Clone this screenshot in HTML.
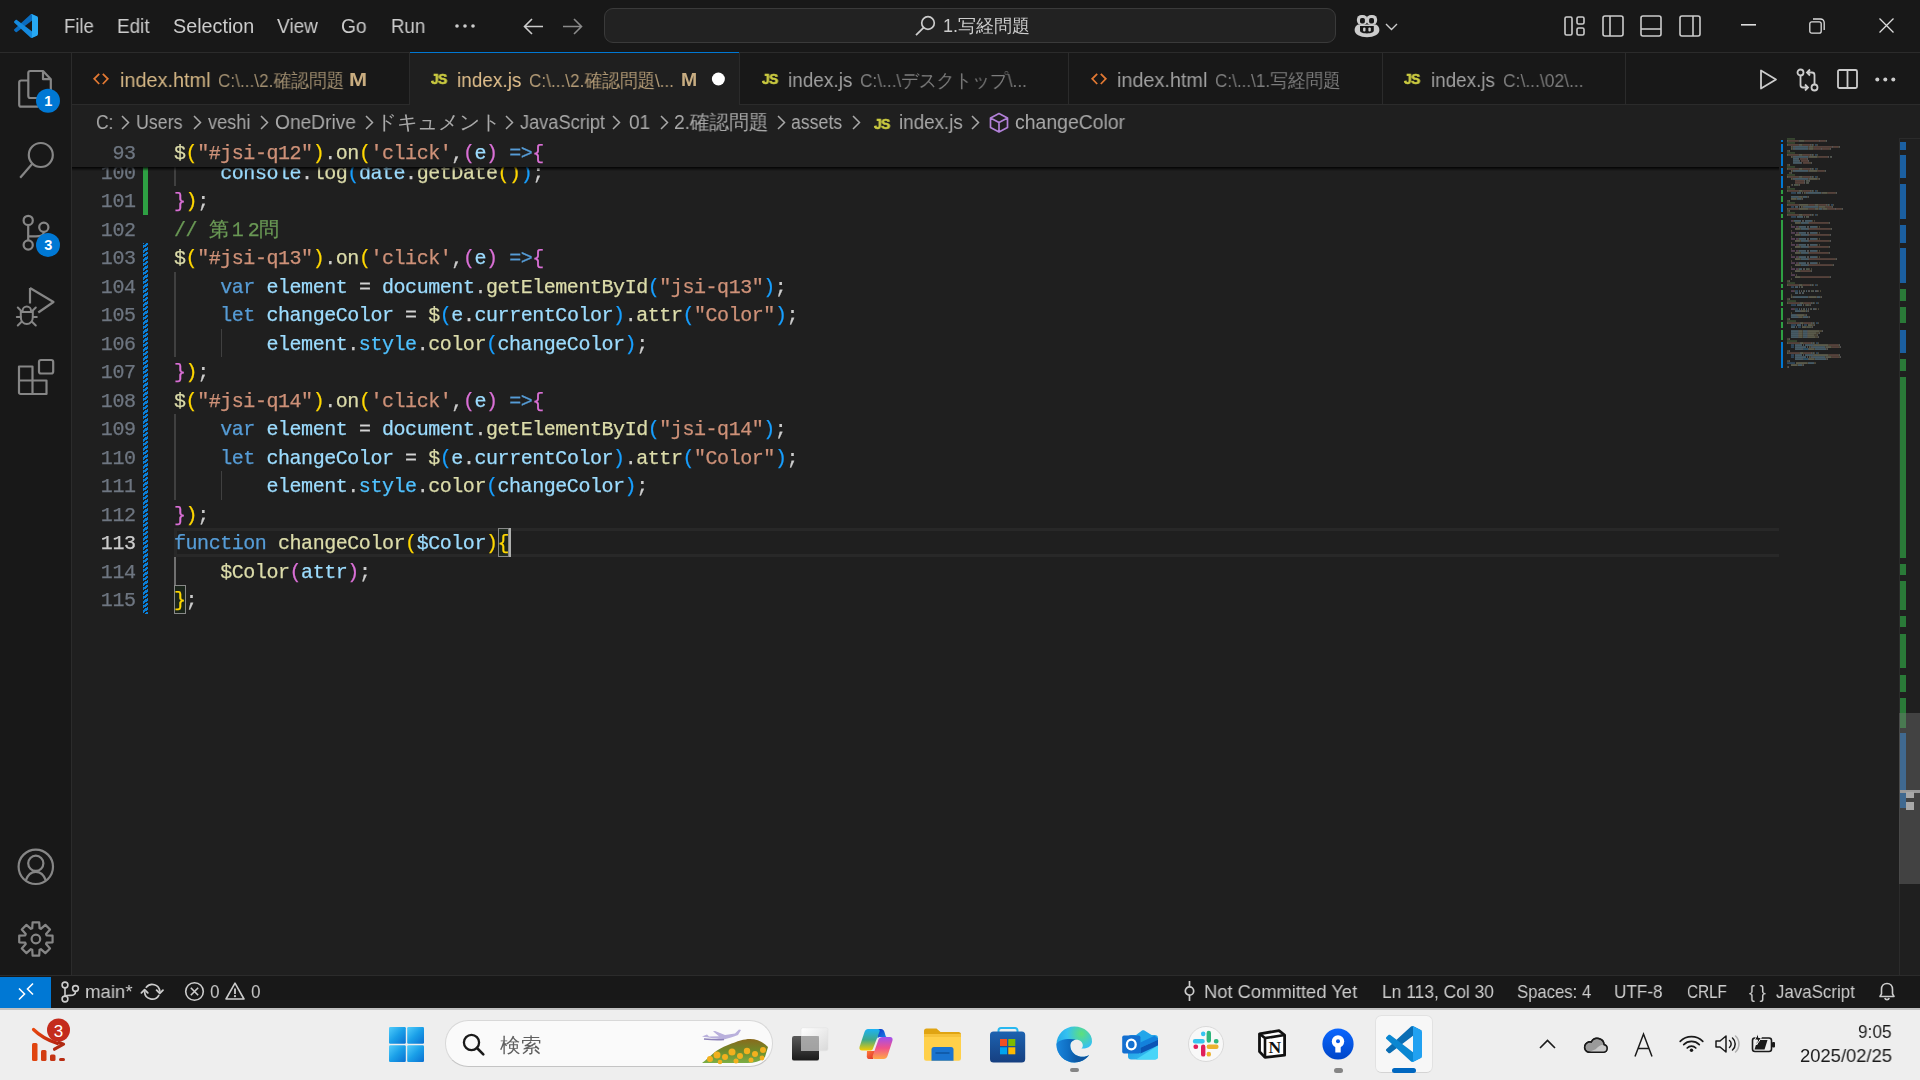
<!DOCTYPE html>
<html><head><meta charset="utf-8">
<style>
*{margin:0;padding:0;box-sizing:border-box}
html,body{width:1920px;height:1080px;overflow:hidden}
body{background:#1f1f1f;font-family:"Liberation Sans",sans-serif;position:relative;color:#cccccc}
.a{position:absolute}
.tx{white-space:nowrap;transform-origin:0 50%;will-change:transform}
.cl,.ln,.js,.bct{will-change:transform}
.cl,.ln{-webkit-text-stroke:0.25px currentColor}
svg{position:absolute;overflow:visible}
#title{left:0;top:0;width:1920px;height:53px;background:#181818;border-bottom:1px solid #2b2b2b}
#act{left:0;top:53px;width:72px;height:923px;background:#181818;border-right:1px solid #2b2b2b}
.js{font-family:"Liberation Sans",sans-serif;font-weight:bold;color:#cbcb41;font-size:15px;letter-spacing:-0.6px;line-height:15px;-webkit-text-stroke:0.6px #cbcb41;transform:scaleX(0.92);transform-origin:0 0}

#tabs{left:72px;top:53px;width:1848px;height:52px;background:#181818;border-bottom:1px solid #2b2b2b}
#bc{left:72px;top:105px;width:1848px;height:33px;background:#1f1f1f}

.cl{position:absolute;left:174.3px;height:28.5px;line-height:28.5px;font-family:"Liberation Mono",monospace;font-size:20px;letter-spacing:-0.4495px;white-space:pre;color:#cccccc}
.ln{position:absolute;left:70px;width:65.5px;text-align:right;height:28.5px;line-height:28.5px;font-family:"Liberation Mono",monospace;font-size:20px;letter-spacing:-0.4495px;color:#6e7681;white-space:pre}
.ig{position:absolute;width:1.5px;height:28.5px;background:#404040}

#status{left:0;top:975px;width:1920px;height:33px;background:#181818;border-top:1.5px solid #2b2b2b}

#taskbar{left:0;top:1008px;width:1920px;height:72px;background:#eeeeee;border-top:2px solid #c2c2c2}
</style></head><body>
<div id="title" class="a">
<svg style="left:14px;top:14px" width="24" height="24" viewBox="0 0 100 100"><path fill="#0a6cbf" d="M96.46 10.8 75.86.88C73.47-.27 70.62.21 68.75 2.08L1.3 63.58c-1.82 1.65-1.81 4.51 0 6.16l5.51 5.01c1.49 1.35 3.72 1.45 5.32.24L93.36 13.37c2.73-2.07 6.64-.12 6.64 3.3v-.24c0-2.4-1.38-4.59-3.54-5.63z"/><path fill="#158ade" d="M96.46 89.2 75.86 99.12c-2.39 1.15-5.24.67-7.11-1.2L1.3 36.42c-1.82-1.65-1.81-4.51 0-6.16l5.51-5.01c1.49-1.35 3.72-1.45 5.32-.24l81.23 61.62c2.73 2.07 6.64.12 6.64-3.3v.24c0 2.4-1.38 4.59-3.54 5.63z"/><path fill="#27a9f4" d="M75.86 99.13c-2.39 1.15-5.24.66-7.11-1.21 2.31 2.31 6.25.67 6.25-2.59V4.67c0-3.26-3.94-4.9-6.25-2.59 1.87-1.87 4.72-2.36 7.11-1.21l20.6 9.91c2.16 1.04 3.54 3.23 3.54 5.63v67.18c0 2.4-1.38 4.59-3.54 5.63z"/></svg>
<svg style="left:455px;top:23px" width="20" height="6"><circle cx="2" cy="3" r="1.8" fill="#cccccc"/><circle cx="10" cy="3" r="1.8" fill="#cccccc"/><circle cx="18" cy="3" r="1.8" fill="#cccccc"/></svg>
<svg style="left:523px;top:18px" width="21" height="17" viewBox="0 0 21 17"><path d="M20 8.5H1.5M9 1 1.5 8.5 9 16" stroke="#cccccc" stroke-width="1.6" fill="none"/></svg>
<svg style="left:562px;top:18px" width="21" height="17" viewBox="0 0 21 17"><path d="M1 8.5h18.5M12 1l7.5 7.5L12 16" stroke="#8a8a8a" stroke-width="1.6" fill="none"/></svg>
<div class="a" style="left:604px;top:8px;width:732px;height:35px;border:1px solid #3a3a3a;border-radius:9px;background:#222222"></div>
<svg style="left:915px;top:15px" width="21" height="21" viewBox="0 0 21 21"><circle cx="13" cy="8" r="6.3" stroke="#cccccc" stroke-width="1.7" fill="none"/><path d="M8.6 12.6 1 20.2" stroke="#cccccc" stroke-width="1.8"/></svg>
<svg style="left:1354px;top:14px" width="26" height="24" viewBox="0 0 26 24"><g fill="#cccccc"><rect x="2.9" y="1" width="10.6" height="10" rx="4.6"/><rect x="12.5" y="1" width="10.6" height="10" rx="4.6"/><path d="M4 10.5h18c2.2 1 3.4 3 3.4 5.5 0 4.5-5.5 7.2-12.4 7.2S.6 20.5.6 16c0-2.5 1.2-4.5 3.4-5.5z"/></g><g fill="#181818"><rect x="6" y="4" width="4.9" height="5.6" rx="1.8"/><rect x="15.1" y="4" width="4.9" height="5.6" rx="1.8"/><path d="M6 12.1h13.8v4.5c0 1.7-2.5 2.9-6.9 2.9S6 18.3 6 16.6z"/></g><g fill="#cccccc"><rect x="9.1" y="13.5" width="2.4" height="4.1" rx="1.1"/><rect x="14.4" y="13.5" width="2.4" height="4.1" rx="1.1"/></g></svg>
<svg style="left:1385px;top:23px" width="13" height="8" viewBox="0 0 13 8"><path d="M1 1l5.5 5.5L12 1" stroke="#cccccc" stroke-width="1.4" fill="none"/></svg>
<svg style="left:1564px;top:16px" width="21" height="20" viewBox="0 0 21 20"><rect x="1" y="1" width="7" height="18" rx="1.5" stroke="#cccccc" stroke-width="1.6" fill="none"/><rect x="13" y="1" width="7" height="7" rx="1.5" stroke="#cccccc" stroke-width="1.6" fill="none"/><rect x="13" y="12" width="7" height="7" rx="1.5" stroke="#cccccc" stroke-width="1.6" fill="none"/></svg>
<svg style="left:1602px;top:15px" width="22" height="22" viewBox="0 0 22 22"><rect x="1" y="1" width="20" height="20" rx="2" stroke="#cccccc" stroke-width="1.6" fill="none"/><path d="M8 1v20" stroke="#cccccc" stroke-width="1.6"/></svg>
<svg style="left:1640px;top:15px" width="22" height="22" viewBox="0 0 22 22"><rect x="1" y="1" width="20" height="20" rx="2" stroke="#cccccc" stroke-width="1.6" fill="none"/><path d="M1 14h20" stroke="#cccccc" stroke-width="1.6"/></svg>
<svg style="left:1679px;top:15px" width="22" height="22" viewBox="0 0 22 22"><rect x="1" y="1" width="20" height="20" rx="2" stroke="#cccccc" stroke-width="1.6" fill="none"/><path d="M14 1v20" stroke="#cccccc" stroke-width="1.6"/></svg>
<svg style="left:1741px;top:24px" width="15" height="2"><rect width="15" height="1.6" fill="#dddddd"/></svg>
<svg style="left:1809px;top:18px" width="16" height="16" viewBox="0 0 16 16"><rect x="0.8" y="3.8" width="11.4" height="11.4" rx="2" stroke="#dddddd" stroke-width="1.3" fill="none"/><path d="M4 1h7.5A3.7 3.7 0 0 1 15.2 4.7V12" stroke="#dddddd" stroke-width="1.3" fill="none"/></svg>
<svg style="left:1879px;top:18px" width="15" height="15" viewBox="0 0 15 15"><path d="M0.5 0.5l14 14M14.5 0.5l-14 14" stroke="#dddddd" stroke-width="1.3"/></svg>
</div>

<div id="t1" class="a tx" style="left:64.20px;top:11.72px;font-size:19.50px;line-height:29.25px;color:#cccccc;font-weight:normal;font-family:'Liberation Sans',sans-serif;transform:scaleX(0.9500);">File</div>
<div id="t2" class="a tx" style="left:117.15px;top:11.72px;font-size:19.50px;line-height:29.25px;color:#cccccc;font-weight:normal;font-family:'Liberation Sans',sans-serif;transform:scaleX(0.9697);">Edit</div>
<div id="t3" class="a tx" style="left:172.91px;top:11.72px;font-size:19.50px;line-height:29.25px;color:#cccccc;font-weight:normal;font-family:'Liberation Sans',sans-serif;transform:scaleX(1.0128);">Selection</div>
<div id="t4" class="a tx" style="left:277.00px;top:11.72px;font-size:19.50px;line-height:29.25px;color:#cccccc;font-weight:normal;font-family:'Liberation Sans',sans-serif;transform:scaleX(0.9762);">View</div>
<div id="t5" class="a tx" style="left:341.10px;top:11.72px;font-size:19.50px;line-height:29.25px;color:#cccccc;font-weight:normal;font-family:'Liberation Sans',sans-serif;transform:scaleX(0.9800);">Go</div>
<div id="t6" class="a tx" style="left:390.75px;top:11.72px;font-size:19.50px;line-height:29.25px;color:#cccccc;font-weight:normal;font-family:'Liberation Sans',sans-serif;transform:scaleX(0.9559);">Run</div>
<div id="t7" class="a tx" style="left:943.00px;top:13.26px;font-size:18.00px;line-height:27.00px;color:#cccccc;font-weight:normal;font-family:'Liberation Sans',sans-serif;transform:scaleX(0.9971);">1.写経問題</div>
<div id="act" class="a">
<svg style="left:0;top:0" width="72" height="923" viewBox="0 53 72 923">
<g stroke="#868686" stroke-width="2.2" fill="none" stroke-linejoin="round">
<path d="M28.3 80.5H21.2a2 2 0 0 0-2 2v22.2a2 2 0 0 0 2 2H38"/>
<path d="M30.3 71H43l7.8 8.2V98H30.3a2 2 0 0 1-2-2V73a2 2 0 0 1 2-2z"/>
<path d="M43 71v8.2h7.8"/>
<circle cx="40.8" cy="155" r="12"/>
<path d="M32.5 163.5 20.2 177.8" stroke-linecap="butt"/>
<circle cx="28.2" cy="220.4" r="4.6"/>
<circle cx="43.8" cy="227.2" r="4.6"/>
<circle cx="28.2" cy="245" r="4.6"/>
<path d="M28.2 225v15.4M43.8 231.8c0 4-3 4.5-8 4.5h-7.6"/>
<path d="M30 288v15.5M30 288 53.5 302 38.3 312.5"/>
<path d="M19 366.5h13.5v14h14V394H20.5a1.5 1.5 0 0 1-1.5-1.5z M19 380.5h13.5V394"/>
<rect x="39" y="360" width="14.2" height="13.5" rx="2"/>
<circle cx="35.8" cy="866.8" r="17.2"/>
<circle cx="35.8" cy="863.3" r="7.6"/>
<path d="M25.7 880.5c2-5.5 6-8.6 10.1-8.6s8.1 3.1 10.1 8.6"/>
<circle cx="35.9" cy="939" r="4.3"/>
</g>
<g stroke="#868686" stroke-width="2" fill="none" stroke-linecap="round"><path d="M22.6 310.8a4.2 4.2 0 0 1 8.4 0"/><path d="M20.8 312h12v5.5a6 6.5 0 0 1-12 0z"/><path d="M17.8 307.5l3.5 3.5M35.8 307.5l-3.5 3.5M16.8 317h4M36.8 317h-4M17.8 325.5l3.8-3.8M35.8 325.5l-3.8-3.8"/></g>
<path fill="none" stroke="#868686" stroke-width="2.2" stroke-linejoin="round" d="M32.22 928.32 L32.60 922.32 L39.20 922.32 L39.58 928.32 L40.85 928.84 L45.36 924.87 L50.03 929.54 L46.06 934.05 L46.58 935.32 L52.58 935.70 L52.58 942.30 L46.58 942.68 L46.06 943.95 L50.03 948.46 L45.36 953.13 L40.85 949.16 L39.58 949.68 L39.20 955.68 L32.60 955.68 L32.22 949.68 L30.95 949.16 L26.44 953.13 L21.77 948.46 L25.74 943.95 L25.22 942.68 L19.22 942.30 L19.22 935.70 L25.22 935.32 L25.74 934.05 L21.77 929.54 L26.44 924.87 L30.95 928.84z"/>
<circle cx="48" cy="100.8" r="12" fill="#0078d4"/>
<text x="48.2" y="106" fill="#fff" font-size="14.5" font-weight="bold" text-anchor="middle" font-family="Liberation Sans">1</text>
<circle cx="48" cy="244.9" r="12" fill="#0078d4"/>
<text x="48.2" y="250.4" fill="#fff" font-size="14.5" font-weight="bold" text-anchor="middle" font-family="Liberation Sans">3</text>
</svg>
</div>

<div id="tabs" class="a"></div>
<div class="a" style="left:409px;top:53px;width:1px;height:52px;background:#2b2b2b"></div>
<div class="a" style="left:739px;top:53px;width:1px;height:52px;background:#2b2b2b"></div>
<div class="a" style="left:1068px;top:53px;width:1px;height:52px;background:#2b2b2b"></div>
<div class="a" style="left:1382px;top:53px;width:1px;height:52px;background:#2b2b2b"></div>
<div class="a" style="left:1625px;top:53px;width:1px;height:52px;background:#2b2b2b"></div>
<div class="a" style="left:410px;top:52px;width:329px;height:54px;background:#1f1f1f;border-top:1.5px solid #0078d4"></div>
<svg style="left:93.3px;top:72.5px" width="16" height="12" viewBox="0 0 16 12"><path d="M6.2 .8 1.2 5.8l5 5.2M9.8 .8l5 5-5 5.2" stroke="#e37933" stroke-width="1.75" fill="none"/></svg>
<div id="t8" class="a tx" style="left:119.92px;top:64.82px;font-size:20.50px;line-height:30.75px;color:#d6b886;font-weight:normal;font-family:'Liberation Sans',sans-serif;transform:scaleX(0.9692);">index.html</div>
<div id="t9" class="a tx" style="left:217.51px;top:67.01px;font-size:18.50px;line-height:27.75px;color:#a08e70;font-weight:normal;font-family:'Liberation Sans',sans-serif;transform:scaleX(0.9284);">C:\...\2.確認問題</div>
<div id="t10" class="a tx" style="left:349.23px;top:66.47px;font-size:19.00px;line-height:28.50px;color:#c9ad80;font-weight:bold;font-family:'Liberation Sans',sans-serif;transform:scaleX(1.1429);">M</div>
<div class="a js" style="left:431px;top:71px">JS</div>
<div id="t11" class="a tx" style="left:457.32px;top:64.82px;font-size:20.50px;line-height:30.75px;color:#e2c08d;font-weight:normal;font-family:'Liberation Sans',sans-serif;transform:scaleX(0.9265);">index.js</div>
<div id="t12" class="a tx" style="left:529.06px;top:67.01px;font-size:18.50px;line-height:27.75px;color:#b39b76;font-weight:normal;font-family:'Liberation Sans',sans-serif;transform:scaleX(0.9279);">C:\...\2.確認問題\...</div>
<div id="t13" class="a tx" style="left:680.84px;top:66.47px;font-size:19.00px;line-height:28.50px;color:#c8ad82;font-weight:bold;font-family:'Liberation Sans',sans-serif;transform:scaleX(1.0214);">M</div>
<svg style="left:711px;top:72px" width="14" height="14"><circle cx="7.4" cy="7" r="6.5" fill="#ffffff"/></svg>
<div class="a js" style="left:762px;top:71px">JS</div>
<div id="t14" class="a tx" style="left:788.32px;top:64.82px;font-size:20.50px;line-height:30.75px;color:#a0a0a0;font-weight:normal;font-family:'Liberation Sans',sans-serif;transform:scaleX(0.9265);">index.js</div>
<div id="t15" class="a tx" style="left:860.32px;top:67.01px;font-size:18.50px;line-height:27.75px;color:#7d7d7d;font-weight:normal;font-family:'Liberation Sans',sans-serif;transform:scaleX(0.9341);">C:\...\デスクトップ\...</div>
<svg style="left:1090.5px;top:72.5px" width="16" height="12" viewBox="0 0 16 12"><path d="M6.2 .8 1.2 5.8l5 5.2M9.8 .8l5 5-5 5.2" stroke="#e37933" stroke-width="1.75" fill="none"/></svg>
<div id="t16" class="a tx" style="left:1117.19px;top:64.82px;font-size:20.50px;line-height:30.75px;color:#a0a0a0;font-weight:normal;font-family:'Liberation Sans',sans-serif;transform:scaleX(0.9670);">index.html</div>
<div id="t17" class="a tx" style="left:1215.35px;top:67.01px;font-size:18.50px;line-height:27.75px;color:#7d7d7d;font-weight:normal;font-family:'Liberation Sans',sans-serif;transform:scaleX(0.9239);">C:\...\1.写経問題</div>
<div class="a js" style="left:1404px;top:71px">JS</div>
<div id="t18" class="a tx" style="left:1430.96px;top:64.82px;font-size:20.50px;line-height:30.75px;color:#a0a0a0;font-weight:normal;font-family:'Liberation Sans',sans-serif;transform:scaleX(0.9191);">index.js</div>
<div id="t19" class="a tx" style="left:1503.02px;top:67.01px;font-size:18.50px;line-height:27.75px;color:#7d7d7d;font-weight:normal;font-family:'Liberation Sans',sans-serif;transform:scaleX(0.9434);">C:\...\02\...</div>
<svg style="left:1759px;top:69px" width="19" height="21" viewBox="0 0 19 21"><path d="M2 1.5v18L17 10.5z" stroke="#cccccc" stroke-width="1.8" fill="none" stroke-linejoin="round"/></svg>
<svg style="left:1796px;top:68px" width="24" height="24" viewBox="0 0 24 24"><circle cx="4.5" cy="4.5" r="3" stroke="#cccccc" stroke-width="1.8" fill="none"/><circle cx="18.5" cy="19.5" r="3" stroke="#cccccc" stroke-width="1.8" fill="none"/><path d="M4.5 7.5v9.5c0 1.5 1 2.5 2.5 2.5h5M9 16.5l3 3-3 3M18.5 16.5V7c0-1.5-1-2.5-2.5-2.5h-5M14 1.5l-3 3 3 3" stroke="#cccccc" stroke-width="1.8" fill="none"/></svg>
<svg style="left:1837px;top:69px" width="21" height="20" viewBox="0 0 21 20"><rect x="1" y="1" width="19" height="18" rx="1.5" stroke="#cccccc" stroke-width="1.8" fill="none"/><path d="M10.5 1v18" stroke="#cccccc" stroke-width="1.8"/></svg>
<svg style="left:1875px;top:77px" width="21" height="5"><circle cx="2.3" cy="2.5" r="2" fill="#cccccc"/><circle cx="10.3" cy="2.5" r="2" fill="#cccccc"/><circle cx="18.3" cy="2.5" r="2" fill="#cccccc"/></svg>
<div id="bc" class="a"></div>
<div id="t20" class="a tx" style="left:95.55px;top:107.92px;font-size:19.50px;line-height:29.25px;color:#a9a9a9;font-weight:normal;font-family:'Liberation Sans',sans-serif;transform:scaleX(0.8941);">C:</div>
<div id="t21" class="a tx" style="left:136.39px;top:107.92px;font-size:19.50px;line-height:29.25px;color:#a9a9a9;font-weight:normal;font-family:'Liberation Sans',sans-serif;transform:scaleX(0.9120);">Users</div>
<div id="t22" class="a tx" style="left:208.00px;top:107.92px;font-size:19.50px;line-height:29.25px;color:#a9a9a9;font-weight:normal;font-family:'Liberation Sans',sans-serif;transform:scaleX(0.9333);">veshi</div>
<div id="t23" class="a tx" style="left:274.85px;top:107.92px;font-size:19.50px;line-height:29.25px;color:#a9a9a9;font-weight:normal;font-family:'Liberation Sans',sans-serif;transform:scaleX(0.9827);">OneDrive</div>
<div id="t24" class="a tx" style="left:376.32px;top:107.92px;font-size:19.50px;line-height:29.25px;color:#a9a9a9;font-weight:normal;font-family:'Liberation Sans',sans-serif;transform:scaleX(1.0370);">ドキュメント</div>
<div id="t25" class="a tx" style="left:520.00px;top:107.92px;font-size:19.50px;line-height:29.25px;color:#a9a9a9;font-weight:normal;font-family:'Liberation Sans',sans-serif;transform:scaleX(0.9341);">JavaScript</div>
<div id="t26" class="a tx" style="left:628.60px;top:107.92px;font-size:19.50px;line-height:29.25px;color:#a9a9a9;font-weight:normal;font-family:'Liberation Sans',sans-serif;transform:scaleX(0.9750);">01</div>
<div id="t27" class="a tx" style="left:673.55px;top:107.92px;font-size:19.50px;line-height:29.25px;color:#a9a9a9;font-weight:normal;font-family:'Liberation Sans',sans-serif;transform:scaleX(0.9840);">2.確認問題</div>
<div id="t28" class="a tx" style="left:791.42px;top:107.92px;font-size:19.50px;line-height:29.25px;color:#a9a9a9;font-weight:normal;font-family:'Liberation Sans',sans-serif;transform:scaleX(0.9091);">assets</div>
<div id="t29" class="a tx" style="left:899.15px;top:107.92px;font-size:19.50px;line-height:29.25px;color:#a9a9a9;font-weight:normal;font-family:'Liberation Sans',sans-serif;transform:scaleX(0.9662);">index.js</div>
<div id="t30" class="a tx" style="left:1015.00px;top:107.92px;font-size:19.50px;line-height:29.25px;color:#a9a9a9;font-weight:normal;font-family:'Liberation Sans',sans-serif;transform:scaleX(0.9954);">changeColor</div>
<svg style="left:120.8px;top:115px" width="9" height="15" viewBox="0 0 9 15"><path d="M1 1l6.5 6.5L1 14" stroke="#a9a9a9" stroke-width="1.5" fill="none"/></svg>
<svg style="left:192.5px;top:115px" width="9" height="15" viewBox="0 0 9 15"><path d="M1 1l6.5 6.5L1 14" stroke="#a9a9a9" stroke-width="1.5" fill="none"/></svg>
<svg style="left:260px;top:115px" width="9" height="15" viewBox="0 0 9 15"><path d="M1 1l6.5 6.5L1 14" stroke="#a9a9a9" stroke-width="1.5" fill="none"/></svg>
<svg style="left:365.4px;top:115px" width="9" height="15" viewBox="0 0 9 15"><path d="M1 1l6.5 6.5L1 14" stroke="#a9a9a9" stroke-width="1.5" fill="none"/></svg>
<svg style="left:505px;top:115px" width="9" height="15" viewBox="0 0 9 15"><path d="M1 1l6.5 6.5L1 14" stroke="#a9a9a9" stroke-width="1.5" fill="none"/></svg>
<svg style="left:612px;top:115px" width="9" height="15" viewBox="0 0 9 15"><path d="M1 1l6.5 6.5L1 14" stroke="#a9a9a9" stroke-width="1.5" fill="none"/></svg>
<svg style="left:660px;top:115px" width="9" height="15" viewBox="0 0 9 15"><path d="M1 1l6.5 6.5L1 14" stroke="#a9a9a9" stroke-width="1.5" fill="none"/></svg>
<svg style="left:777px;top:115px" width="9" height="15" viewBox="0 0 9 15"><path d="M1 1l6.5 6.5L1 14" stroke="#a9a9a9" stroke-width="1.5" fill="none"/></svg>
<svg style="left:851.7px;top:115px" width="9" height="15" viewBox="0 0 9 15"><path d="M1 1l6.5 6.5L1 14" stroke="#a9a9a9" stroke-width="1.5" fill="none"/></svg>
<svg style="left:971px;top:115px" width="9" height="15" viewBox="0 0 9 15"><path d="M1 1l6.5 6.5L1 14" stroke="#a9a9a9" stroke-width="1.5" fill="none"/></svg>
<div class="a js" style="left:874px;top:116px">JS</div>
<svg style="left:989px;top:112px" width="20" height="21" viewBox="0 0 20 21"><path d="M10 1.5 18.5 6v9.5L10 20 1.5 15.5V6zM1.5 6 10 10.5 18.5 6M10 10.5V20" stroke="#b180d7" stroke-width="1.7" fill="none" stroke-linejoin="round"/></svg>
<div class="a" style="left:174px;top:528.25px;width:1605px;height:28.5px;border:3px solid #282828;border-right:none"></div>
<div class="a" style="left:497.70px;top:528.25px;width:11.8px;height:28.5px;border:1.5px solid #888888;background:rgba(0,100,0,.1)"></div>
<div class="a" style="left:174.30px;top:585.25px;width:11.8px;height:28.5px;border:1.5px solid #888888;background:rgba(0,100,0,.1)"></div>
<div class="ig" style="left:174.3px;top:157.75px"></div>
<div class="ig" style="left:174.3px;top:271.75px"></div>
<div class="ig" style="left:174.3px;top:300.25px"></div>
<div class="ig" style="left:174.3px;top:328.75px"></div>
<div class="ig" style="left:174.3px;top:414.25px"></div>
<div class="ig" style="left:174.3px;top:442.75px"></div>
<div class="ig" style="left:174.3px;top:471.25px"></div>
<div class="ig" style="left:220.50px;top:328.75px"></div>
<div class="ig" style="left:220.50px;top:471.25px"></div>
<div class="ig" style="left:174.3px;top:556.75px;background:#707070"></div>
<div class="cl" style="top:159.65px"><span style="color:#cccccc">    </span><span style="color:#9cdcfe">console</span><span style="color:#cccccc">.</span><span style="color:#dcdcaa">log</span><span style="color:#179fff">(</span><span style="color:#9cdcfe">date</span><span style="color:#cccccc">.</span><span style="color:#dcdcaa">getDate</span><span style="color:#ffd700">()</span><span style="color:#179fff">)</span><span style="color:#cccccc">;</span></div>
<div class="ln" style="top:159.65px;color:#6e7681">100</div>
<div class="cl" style="top:188.15px"><span style="color:#da70d6">}</span><span style="color:#ffd700">)</span><span style="color:#cccccc">;</span></div>
<div class="ln" style="top:188.15px;color:#6e7681">101</div>
<div class="cl" style="top:216.65px"><span style="color:#6a9955">// 第１2問</span></div>
<div class="ln" style="top:216.65px;color:#6e7681">102</div>
<div class="cl" style="top:245.15px"><span style="color:#dcdcaa">$</span><span style="color:#ffd700">(</span><span style="color:#ce9178">"#jsi-q13"</span><span style="color:#ffd700">)</span><span style="color:#cccccc">.</span><span style="color:#dcdcaa">on</span><span style="color:#ffd700">(</span><span style="color:#ce9178">'click'</span><span style="color:#cccccc">,</span><span style="color:#da70d6">(</span><span style="color:#9cdcfe">e</span><span style="color:#da70d6">)</span><span style="color:#cccccc"> </span><span style="color:#569cd6">=&gt;</span><span style="color:#da70d6">{</span></div>
<div class="ln" style="top:245.15px;color:#6e7681">103</div>
<div class="cl" style="top:273.65px"><span style="color:#cccccc">    </span><span style="color:#569cd6">var</span><span style="color:#cccccc"> </span><span style="color:#9cdcfe">element</span><span style="color:#cccccc"> </span><span style="color:#d4d4d4">=</span><span style="color:#cccccc"> </span><span style="color:#9cdcfe">document</span><span style="color:#cccccc">.</span><span style="color:#dcdcaa">getElementById</span><span style="color:#179fff">(</span><span style="color:#ce9178">"jsi-q13"</span><span style="color:#179fff">)</span><span style="color:#cccccc">;</span></div>
<div class="ln" style="top:273.65px;color:#6e7681">104</div>
<div class="cl" style="top:302.15px"><span style="color:#cccccc">    </span><span style="color:#569cd6">let</span><span style="color:#cccccc"> </span><span style="color:#9cdcfe">changeColor</span><span style="color:#cccccc"> </span><span style="color:#d4d4d4">=</span><span style="color:#cccccc"> </span><span style="color:#dcdcaa">$</span><span style="color:#179fff">(</span><span style="color:#9cdcfe">e</span><span style="color:#cccccc">.</span><span style="color:#9cdcfe">currentColor</span><span style="color:#179fff">)</span><span style="color:#cccccc">.</span><span style="color:#dcdcaa">attr</span><span style="color:#179fff">(</span><span style="color:#ce9178">"Color"</span><span style="color:#179fff">)</span><span style="color:#cccccc">;</span></div>
<div class="ln" style="top:302.15px;color:#6e7681">105</div>
<div class="cl" style="top:330.65px"><span style="color:#cccccc">        </span><span style="color:#9cdcfe">element</span><span style="color:#cccccc">.</span><span style="color:#4fc1ff">style</span><span style="color:#cccccc">.</span><span style="color:#dcdcaa">color</span><span style="color:#179fff">(</span><span style="color:#9cdcfe">changeColor</span><span style="color:#179fff">)</span><span style="color:#cccccc">;</span></div>
<div class="ln" style="top:330.65px;color:#6e7681">106</div>
<div class="cl" style="top:359.15px"><span style="color:#da70d6">}</span><span style="color:#ffd700">)</span><span style="color:#cccccc">;</span></div>
<div class="ln" style="top:359.15px;color:#6e7681">107</div>
<div class="cl" style="top:387.65px"><span style="color:#dcdcaa">$</span><span style="color:#ffd700">(</span><span style="color:#ce9178">"#jsi-q14"</span><span style="color:#ffd700">)</span><span style="color:#cccccc">.</span><span style="color:#dcdcaa">on</span><span style="color:#ffd700">(</span><span style="color:#ce9178">'click'</span><span style="color:#cccccc">,</span><span style="color:#da70d6">(</span><span style="color:#9cdcfe">e</span><span style="color:#da70d6">)</span><span style="color:#cccccc"> </span><span style="color:#569cd6">=&gt;</span><span style="color:#da70d6">{</span></div>
<div class="ln" style="top:387.65px;color:#6e7681">108</div>
<div class="cl" style="top:416.15px"><span style="color:#cccccc">    </span><span style="color:#569cd6">var</span><span style="color:#cccccc"> </span><span style="color:#9cdcfe">element</span><span style="color:#cccccc"> </span><span style="color:#d4d4d4">=</span><span style="color:#cccccc"> </span><span style="color:#9cdcfe">document</span><span style="color:#cccccc">.</span><span style="color:#dcdcaa">getElementById</span><span style="color:#179fff">(</span><span style="color:#ce9178">"jsi-q14"</span><span style="color:#179fff">)</span><span style="color:#cccccc">;</span></div>
<div class="ln" style="top:416.15px;color:#6e7681">109</div>
<div class="cl" style="top:444.65px"><span style="color:#cccccc">    </span><span style="color:#569cd6">let</span><span style="color:#cccccc"> </span><span style="color:#9cdcfe">changeColor</span><span style="color:#cccccc"> </span><span style="color:#d4d4d4">=</span><span style="color:#cccccc"> </span><span style="color:#dcdcaa">$</span><span style="color:#179fff">(</span><span style="color:#9cdcfe">e</span><span style="color:#cccccc">.</span><span style="color:#9cdcfe">currentColor</span><span style="color:#179fff">)</span><span style="color:#cccccc">.</span><span style="color:#dcdcaa">attr</span><span style="color:#179fff">(</span><span style="color:#ce9178">"Color"</span><span style="color:#179fff">)</span><span style="color:#cccccc">;</span></div>
<div class="ln" style="top:444.65px;color:#6e7681">110</div>
<div class="cl" style="top:473.15px"><span style="color:#cccccc">        </span><span style="color:#9cdcfe">element</span><span style="color:#cccccc">.</span><span style="color:#4fc1ff">style</span><span style="color:#cccccc">.</span><span style="color:#dcdcaa">color</span><span style="color:#179fff">(</span><span style="color:#9cdcfe">changeColor</span><span style="color:#179fff">)</span><span style="color:#cccccc">;</span></div>
<div class="ln" style="top:473.15px;color:#6e7681">111</div>
<div class="cl" style="top:501.65px"><span style="color:#da70d6">}</span><span style="color:#ffd700">)</span><span style="color:#cccccc">;</span></div>
<div class="ln" style="top:501.65px;color:#6e7681">112</div>
<div class="cl" style="top:530.15px"><span style="color:#569cd6">function</span><span style="color:#cccccc"> </span><span style="color:#dcdcaa">changeColor</span><span style="color:#ffd700">(</span><span style="color:#9cdcfe">$Color</span><span style="color:#ffd700">)</span><span style="color:#ffd700">{</span></div>
<div class="ln" style="top:530.15px;color:#cccccc">113</div>
<div class="cl" style="top:558.65px"><span style="color:#cccccc">    </span><span style="color:#dcdcaa">$Color</span><span style="color:#da70d6">(</span><span style="color:#9cdcfe">attr</span><span style="color:#da70d6">)</span><span style="color:#cccccc">;</span></div>
<div class="ln" style="top:558.65px;color:#6e7681">114</div>
<div class="cl" style="top:587.15px"><span style="color:#ffd700">}</span><span style="color:#cccccc">;</span></div>
<div class="ln" style="top:587.15px;color:#6e7681">115</div>
<div class="a" style="left:508.75px;top:528.25px;width:2px;height:28.5px;background:#aeafad"></div>
<div class="a" style="left:143px;top:157.75px;width:4.5px;height:57px;background:#2ea043"></div>
<div class="a" style="left:143px;top:243.25px;width:4.5px;height:370.5px;background:repeating-linear-gradient(-34deg,#0a7fd8 0px,#0a7fd8 2.3px,#1f1f1f 2.3px,#1f1f1f 3.73px)"></div>
<div class="a" style="left:72px;top:138px;width:1707px;height:28.5px;background:#1f1f1f"></div>
<div class="a" style="left:72px;top:166.5px;width:1707px;height:4px;background:linear-gradient(rgba(0,0,0,.85),rgba(0,0,0,0))"></div>
<div class="cl" style="top:139.90px"><span style="color:#dcdcaa">$</span><span style="color:#ffd700">(</span><span style="color:#ce9178">"#jsi-q12"</span><span style="color:#ffd700">)</span><span style="color:#cccccc">.</span><span style="color:#dcdcaa">on</span><span style="color:#ffd700">(</span><span style="color:#ce9178">'click'</span><span style="color:#cccccc">,</span><span style="color:#da70d6">(</span><span style="color:#9cdcfe">e</span><span style="color:#da70d6">)</span><span style="color:#cccccc"> </span><span style="color:#569cd6">=&gt;</span><span style="color:#da70d6">{</span></div>
<div class="ln" style="top:139.90px">93</div>
<svg style="left:1787px;top:0" width="110" height="400" viewBox="0 0 110 400"><g opacity="0.45"><rect x="0" y="138.3" width="8" height="1.3" fill="#6a9955"/><rect x="0" y="140.3" width="1" height="1.3" fill="#dcdcaa"/><rect x="1" y="140.3" width="1" height="1.3" fill="#b0a070"/><rect x="2" y="140.3" width="9" height="1.3" fill="#ce9178"/><rect x="11" y="140.3" width="1" height="1.3" fill="#b0a070"/><rect x="12" y="140.3" width="1" height="1.3" fill="#cccccc"/><rect x="13" y="140.3" width="4" height="1.3" fill="#dcdcaa"/><rect x="17" y="140.3" width="1" height="1.3" fill="#b0a070"/><rect x="18" y="140.3" width="14" height="1.3" fill="#ce9178"/><rect x="32" y="140.3" width="1" height="1.3" fill="#cccccc"/><rect x="33" y="140.3" width="5" height="1.3" fill="#ce9178"/><rect x="38" y="140.3" width="1" height="1.3" fill="#b0a070"/><rect x="39" y="140.3" width="1" height="1.3" fill="#cccccc"/><rect x="0" y="142.3" width="8" height="1.3" fill="#6a9955"/><rect x="0" y="144.3" width="1" height="1.3" fill="#dcdcaa"/><rect x="1" y="144.3" width="1" height="1.3" fill="#b0a070"/><rect x="2" y="144.3" width="9" height="1.3" fill="#ce9178"/><rect x="11" y="144.3" width="1" height="1.3" fill="#b0a070"/><rect x="12" y="144.3" width="1" height="1.3" fill="#cccccc"/><rect x="13" y="144.3" width="2" height="1.3" fill="#dcdcaa"/><rect x="15" y="144.3" width="1" height="1.3" fill="#b0a070"/><rect x="16" y="144.3" width="7" height="1.3" fill="#ce9178"/><rect x="23" y="144.3" width="1" height="1.3" fill="#cccccc"/><rect x="24" y="144.3" width="1" height="1.3" fill="#b0a070"/><rect x="25" y="144.3" width="1" height="1.3" fill="#9cdcfe"/><rect x="26" y="144.3" width="1" height="1.3" fill="#b0a070"/><rect x="28" y="144.3" width="2" height="1.3" fill="#569cd6"/><rect x="30" y="144.3" width="1" height="1.3" fill="#b0a070"/><rect x="4" y="146.3" width="1" height="1.3" fill="#dcdcaa"/><rect x="5" y="146.3" width="1" height="1.3" fill="#b0a070"/><rect x="6" y="146.3" width="1" height="1.3" fill="#9cdcfe"/><rect x="7" y="146.3" width="1" height="1.3" fill="#cccccc"/><rect x="8" y="146.3" width="13" height="1.3" fill="#9cdcfe"/><rect x="21" y="146.3" width="1" height="1.3" fill="#b0a070"/><rect x="22" y="146.3" width="1" height="1.3" fill="#cccccc"/><rect x="23" y="146.3" width="3" height="1.3" fill="#dcdcaa"/><rect x="26" y="146.3" width="1" height="1.3" fill="#b0a070"/><rect x="27" y="146.3" width="18" height="1.3" fill="#ce9178"/><rect x="45" y="146.3" width="1" height="1.3" fill="#cccccc"/><rect x="46" y="146.3" width="5" height="1.3" fill="#ce9178"/><rect x="51" y="146.3" width="1" height="1.3" fill="#b0a070"/><rect x="52" y="146.3" width="1" height="1.3" fill="#cccccc"/><rect x="4" y="148.3" width="1" height="1.3" fill="#dcdcaa"/><rect x="5" y="148.3" width="1" height="1.3" fill="#b0a070"/><rect x="6" y="148.3" width="1" height="1.3" fill="#9cdcfe"/><rect x="7" y="148.3" width="1" height="1.3" fill="#cccccc"/><rect x="8" y="148.3" width="13" height="1.3" fill="#9cdcfe"/><rect x="21" y="148.3" width="1" height="1.3" fill="#b0a070"/><rect x="22" y="148.3" width="1" height="1.3" fill="#cccccc"/><rect x="23" y="148.3" width="3" height="1.3" fill="#dcdcaa"/><rect x="26" y="148.3" width="1" height="1.3" fill="#b0a070"/><rect x="27" y="148.3" width="7" height="1.3" fill="#ce9178"/><rect x="34" y="148.3" width="1" height="1.3" fill="#cccccc"/><rect x="35" y="148.3" width="7" height="1.3" fill="#ce9178"/><rect x="42" y="148.3" width="1" height="1.3" fill="#b0a070"/><rect x="43" y="148.3" width="1" height="1.3" fill="#cccccc"/><rect x="0" y="150.3" width="1" height="1.3" fill="#b0a070"/><rect x="1" y="150.3" width="1" height="1.3" fill="#b0a070"/><rect x="2" y="150.3" width="1" height="1.3" fill="#cccccc"/><rect x="0" y="152.3" width="8" height="1.3" fill="#6a9955"/><rect x="0" y="154.3" width="1" height="1.3" fill="#dcdcaa"/><rect x="1" y="154.3" width="1" height="1.3" fill="#b0a070"/><rect x="2" y="154.3" width="9" height="1.3" fill="#ce9178"/><rect x="11" y="154.3" width="1" height="1.3" fill="#b0a070"/><rect x="12" y="154.3" width="1" height="1.3" fill="#cccccc"/><rect x="13" y="154.3" width="2" height="1.3" fill="#dcdcaa"/><rect x="15" y="154.3" width="1" height="1.3" fill="#b0a070"/><rect x="16" y="154.3" width="7" height="1.3" fill="#ce9178"/><rect x="23" y="154.3" width="1" height="1.3" fill="#cccccc"/><rect x="24" y="154.3" width="1" height="1.3" fill="#b0a070"/><rect x="25" y="154.3" width="1" height="1.3" fill="#9cdcfe"/><rect x="26" y="154.3" width="1" height="1.3" fill="#b0a070"/><rect x="28" y="154.3" width="2" height="1.3" fill="#569cd6"/><rect x="30" y="154.3" width="1" height="1.3" fill="#b0a070"/><rect x="4" y="156.3" width="1" height="1.3" fill="#dcdcaa"/><rect x="5" y="156.3" width="1" height="1.3" fill="#b0a070"/><rect x="6" y="156.3" width="1" height="1.3" fill="#9cdcfe"/><rect x="7" y="156.3" width="1" height="1.3" fill="#cccccc"/><rect x="8" y="156.3" width="13" height="1.3" fill="#9cdcfe"/><rect x="21" y="156.3" width="1" height="1.3" fill="#b0a070"/><rect x="22" y="156.3" width="1" height="1.3" fill="#cccccc"/><rect x="23" y="156.3" width="7" height="1.3" fill="#dcdcaa"/><rect x="30" y="156.3" width="1" height="1.3" fill="#b0a070"/><rect x="31" y="156.3" width="1" height="1.3" fill="#b0a070"/><rect x="32" y="156.3" width="9" height="1.3" fill="#ce9178"/><rect x="41" y="156.3" width="1" height="1.3" fill="#cccccc"/><rect x="43" y="156.3" width="1" height="1.3" fill="#b5cea8"/><rect x="44" y="156.3" width="1" height="1.3" fill="#cccccc"/><rect x="6" y="158.3" width="5" height="1.3" fill="#9cdcfe"/><rect x="11" y="158.3" width="1" height="1.3" fill="#cccccc"/><rect x="13" y="158.3" width="7" height="1.3" fill="#ce9178"/><rect x="20" y="158.3" width="1" height="1.3" fill="#cccccc"/><rect x="6" y="160.3" width="6" height="1.3" fill="#9cdcfe"/><rect x="12" y="160.3" width="1" height="1.3" fill="#cccccc"/><rect x="14" y="160.3" width="7" height="1.3" fill="#ce9178"/><rect x="21" y="160.3" width="1" height="1.3" fill="#cccccc"/><rect x="6" y="162.3" width="8" height="1.3" fill="#9cdcfe"/><rect x="14" y="162.3" width="1" height="1.3" fill="#cccccc"/><rect x="16" y="162.3" width="6" height="1.3" fill="#ce9178"/><rect x="22" y="162.3" width="1" height="1.3" fill="#b0a070"/><rect x="23" y="162.3" width="1" height="1.3" fill="#b0a070"/><rect x="24" y="162.3" width="1" height="1.3" fill="#cccccc"/><rect x="0" y="164.3" width="1" height="1.3" fill="#b0a070"/><rect x="1" y="164.3" width="1" height="1.3" fill="#b0a070"/><rect x="2" y="164.3" width="1" height="1.3" fill="#cccccc"/><rect x="0" y="166.3" width="8" height="1.3" fill="#6a9955"/><rect x="0" y="168.3" width="1" height="1.3" fill="#dcdcaa"/><rect x="1" y="168.3" width="1" height="1.3" fill="#b0a070"/><rect x="2" y="168.3" width="9" height="1.3" fill="#ce9178"/><rect x="11" y="168.3" width="1" height="1.3" fill="#b0a070"/><rect x="12" y="168.3" width="1" height="1.3" fill="#cccccc"/><rect x="13" y="168.3" width="2" height="1.3" fill="#dcdcaa"/><rect x="15" y="168.3" width="1" height="1.3" fill="#b0a070"/><rect x="16" y="168.3" width="7" height="1.3" fill="#ce9178"/><rect x="23" y="168.3" width="1" height="1.3" fill="#cccccc"/><rect x="24" y="168.3" width="1" height="1.3" fill="#b0a070"/><rect x="25" y="168.3" width="1" height="1.3" fill="#9cdcfe"/><rect x="26" y="168.3" width="1" height="1.3" fill="#b0a070"/><rect x="28" y="168.3" width="2" height="1.3" fill="#569cd6"/><rect x="30" y="168.3" width="1" height="1.3" fill="#b0a070"/><rect x="4" y="170.3" width="1" height="1.3" fill="#dcdcaa"/><rect x="5" y="170.3" width="1" height="1.3" fill="#b0a070"/><rect x="6" y="170.3" width="1" height="1.3" fill="#9cdcfe"/><rect x="7" y="170.3" width="1" height="1.3" fill="#cccccc"/><rect x="8" y="170.3" width="13" height="1.3" fill="#9cdcfe"/><rect x="21" y="170.3" width="1" height="1.3" fill="#b0a070"/><rect x="22" y="170.3" width="1" height="1.3" fill="#cccccc"/><rect x="23" y="170.3" width="7" height="1.3" fill="#dcdcaa"/><rect x="30" y="170.3" width="1" height="1.3" fill="#b0a070"/><rect x="31" y="170.3" width="6" height="1.3" fill="#ce9178"/><rect x="37" y="170.3" width="1" height="1.3" fill="#b0a070"/><rect x="38" y="170.3" width="1" height="1.3" fill="#cccccc"/><rect x="2" y="172.3" width="1" height="1.3" fill="#b0a070"/><rect x="3" y="172.3" width="1" height="1.3" fill="#b0a070"/><rect x="4" y="172.3" width="1" height="1.3" fill="#cccccc"/><rect x="0" y="174.3" width="8" height="1.3" fill="#6a9955"/><rect x="0" y="176.3" width="1" height="1.3" fill="#dcdcaa"/><rect x="1" y="176.3" width="1" height="1.3" fill="#b0a070"/><rect x="2" y="176.3" width="9" height="1.3" fill="#ce9178"/><rect x="11" y="176.3" width="1" height="1.3" fill="#b0a070"/><rect x="12" y="176.3" width="1" height="1.3" fill="#cccccc"/><rect x="13" y="176.3" width="2" height="1.3" fill="#dcdcaa"/><rect x="15" y="176.3" width="1" height="1.3" fill="#b0a070"/><rect x="16" y="176.3" width="7" height="1.3" fill="#ce9178"/><rect x="23" y="176.3" width="1" height="1.3" fill="#cccccc"/><rect x="24" y="176.3" width="1" height="1.3" fill="#b0a070"/><rect x="25" y="176.3" width="1" height="1.3" fill="#9cdcfe"/><rect x="26" y="176.3" width="1" height="1.3" fill="#b0a070"/><rect x="28" y="176.3" width="2" height="1.3" fill="#569cd6"/><rect x="30" y="176.3" width="1" height="1.3" fill="#b0a070"/><rect x="4" y="178.3" width="1" height="1.3" fill="#dcdcaa"/><rect x="5" y="178.3" width="1" height="1.3" fill="#b0a070"/><rect x="6" y="178.3" width="1" height="1.3" fill="#9cdcfe"/><rect x="7" y="178.3" width="1" height="1.3" fill="#cccccc"/><rect x="8" y="178.3" width="13" height="1.3" fill="#9cdcfe"/><rect x="21" y="178.3" width="1" height="1.3" fill="#b0a070"/><rect x="22" y="178.3" width="1" height="1.3" fill="#cccccc"/><rect x="23" y="178.3" width="7" height="1.3" fill="#dcdcaa"/><rect x="30" y="178.3" width="1" height="1.3" fill="#b0a070"/><rect x="31" y="178.3" width="1" height="1.3" fill="#b0a070"/><rect x="32" y="178.3" width="1" height="1.3" fill="#cccccc"/><rect x="8" y="180.3" width="9" height="1.3" fill="#ce9178"/><rect x="17" y="180.3" width="1" height="1.3" fill="#cccccc"/><rect x="19" y="180.3" width="1" height="1.3" fill="#b5cea8"/><rect x="20" y="180.3" width="1" height="1.3" fill="#cccccc"/><rect x="21" y="180.3" width="1" height="1.3" fill="#b5cea8"/><rect x="22" y="180.3" width="1" height="1.3" fill="#cccccc"/><rect x="8" y="182.3" width="9" height="1.3" fill="#ce9178"/><rect x="17" y="182.3" width="1" height="1.3" fill="#cccccc"/><rect x="19" y="182.3" width="1" height="1.3" fill="#b5cea8"/><rect x="20" y="182.3" width="1" height="1.3" fill="#cccccc"/><rect x="21" y="182.3" width="1" height="1.3" fill="#b5cea8"/><rect x="4" y="184.3" width="1" height="1.3" fill="#b0a070"/><rect x="5" y="184.3" width="1" height="1.3" fill="#cccccc"/><rect x="7" y="184.3" width="4" height="1.3" fill="#b5cea8"/><rect x="11" y="184.3" width="1" height="1.3" fill="#b0a070"/><rect x="12" y="184.3" width="1" height="1.3" fill="#cccccc"/><rect x="0" y="186.3" width="1" height="1.3" fill="#b0a070"/><rect x="1" y="186.3" width="1" height="1.3" fill="#b0a070"/><rect x="2" y="186.3" width="1" height="1.3" fill="#cccccc"/><rect x="0" y="188.3" width="8" height="1.3" fill="#6a9955"/><rect x="0" y="190.3" width="1" height="1.3" fill="#dcdcaa"/><rect x="1" y="190.3" width="1" height="1.3" fill="#b0a070"/><rect x="2" y="190.3" width="9" height="1.3" fill="#ce9178"/><rect x="11" y="190.3" width="1" height="1.3" fill="#b0a070"/><rect x="12" y="190.3" width="1" height="1.3" fill="#cccccc"/><rect x="13" y="190.3" width="2" height="1.3" fill="#dcdcaa"/><rect x="15" y="190.3" width="1" height="1.3" fill="#b0a070"/><rect x="16" y="190.3" width="7" height="1.3" fill="#ce9178"/><rect x="23" y="190.3" width="1" height="1.3" fill="#cccccc"/><rect x="24" y="190.3" width="1" height="1.3" fill="#b0a070"/><rect x="25" y="190.3" width="1" height="1.3" fill="#9cdcfe"/><rect x="26" y="190.3" width="1" height="1.3" fill="#b0a070"/><rect x="28" y="190.3" width="2" height="1.3" fill="#569cd6"/><rect x="30" y="190.3" width="1" height="1.3" fill="#b0a070"/><rect x="4" y="192.3" width="5" height="1.3" fill="#569cd6"/><rect x="10" y="192.3" width="4" height="1.3" fill="#9cdcfe"/><rect x="15" y="192.3" width="1" height="1.3" fill="#cccccc"/><rect x="17" y="192.3" width="1" height="1.3" fill="#dcdcaa"/><rect x="18" y="192.3" width="1" height="1.3" fill="#b0a070"/><rect x="19" y="192.3" width="1" height="1.3" fill="#9cdcfe"/><rect x="20" y="192.3" width="1" height="1.3" fill="#cccccc"/><rect x="21" y="192.3" width="13" height="1.3" fill="#9cdcfe"/><rect x="34" y="192.3" width="1" height="1.3" fill="#b0a070"/><rect x="35" y="192.3" width="1" height="1.3" fill="#cccccc"/><rect x="36" y="192.3" width="4" height="1.3" fill="#dcdcaa"/><rect x="40" y="192.3" width="1" height="1.3" fill="#b0a070"/><rect x="41" y="192.3" width="7" height="1.3" fill="#ce9178"/><rect x="48" y="192.3" width="1" height="1.3" fill="#b0a070"/><rect x="49" y="192.3" width="1" height="1.3" fill="#cccccc"/><rect x="4" y="196.3" width="7" height="1.3" fill="#9cdcfe"/><rect x="11" y="196.3" width="1" height="1.3" fill="#cccccc"/><rect x="12" y="196.3" width="3" height="1.3" fill="#dcdcaa"/><rect x="15" y="196.3" width="1" height="1.3" fill="#b0a070"/><rect x="16" y="196.3" width="4" height="1.3" fill="#9cdcfe"/><rect x="20" y="196.3" width="1" height="1.3" fill="#b0a070"/><rect x="21" y="196.3" width="1" height="1.3" fill="#cccccc"/><rect x="4" y="198.3" width="5" height="1.3" fill="#dcdcaa"/><rect x="9" y="198.3" width="1" height="1.3" fill="#b0a070"/><rect x="10" y="198.3" width="4" height="1.3" fill="#9cdcfe"/><rect x="14" y="198.3" width="1" height="1.3" fill="#b0a070"/><rect x="15" y="198.3" width="1" height="1.3" fill="#cccccc"/><rect x="0" y="200.3" width="1" height="1.3" fill="#b0a070"/><rect x="1" y="200.3" width="1" height="1.3" fill="#b0a070"/><rect x="2" y="200.3" width="1" height="1.3" fill="#cccccc"/><rect x="0" y="202.3" width="8" height="1.3" fill="#6a9955"/><rect x="0" y="204.3" width="1" height="1.3" fill="#dcdcaa"/><rect x="1" y="204.3" width="1" height="1.3" fill="#b0a070"/><rect x="2" y="204.3" width="9" height="1.3" fill="#ce9178"/><rect x="11" y="204.3" width="1" height="1.3" fill="#b0a070"/><rect x="12" y="204.3" width="1" height="1.3" fill="#cccccc"/><rect x="13" y="204.3" width="8" height="1.3" fill="#dcdcaa"/><rect x="21" y="204.3" width="1" height="1.3" fill="#b0a070"/><rect x="22" y="204.3" width="5" height="1.3" fill="#ce9178"/><rect x="27" y="204.3" width="1" height="1.3" fill="#b0a070"/><rect x="28" y="204.3" width="1" height="1.3" fill="#cccccc"/><rect x="29" y="204.3" width="2" height="1.3" fill="#dcdcaa"/><rect x="31" y="204.3" width="1" height="1.3" fill="#b0a070"/><rect x="32" y="204.3" width="7" height="1.3" fill="#ce9178"/><rect x="39" y="204.3" width="1" height="1.3" fill="#cccccc"/><rect x="40" y="204.3" width="1" height="1.3" fill="#b0a070"/><rect x="41" y="204.3" width="1" height="1.3" fill="#9cdcfe"/><rect x="42" y="204.3" width="1" height="1.3" fill="#b0a070"/><rect x="44" y="204.3" width="2" height="1.3" fill="#569cd6"/><rect x="46" y="204.3" width="1" height="1.3" fill="#b0a070"/><rect x="4" y="206.3" width="3" height="1.3" fill="#569cd6"/><rect x="8" y="206.3" width="3" height="1.3" fill="#9cdcfe"/><rect x="12" y="206.3" width="1" height="1.3" fill="#cccccc"/><rect x="14" y="206.3" width="1" height="1.3" fill="#dcdcaa"/><rect x="15" y="206.3" width="1" height="1.3" fill="#b0a070"/><rect x="16" y="206.3" width="1" height="1.3" fill="#9cdcfe"/><rect x="17" y="206.3" width="1" height="1.3" fill="#cccccc"/><rect x="18" y="206.3" width="13" height="1.3" fill="#9cdcfe"/><rect x="31" y="206.3" width="1" height="1.3" fill="#b0a070"/><rect x="32" y="206.3" width="1" height="1.3" fill="#cccccc"/><rect x="33" y="206.3" width="5" height="1.3" fill="#dcdcaa"/><rect x="38" y="206.3" width="1" height="1.3" fill="#b0a070"/><rect x="39" y="206.3" width="5" height="1.3" fill="#ce9178"/><rect x="44" y="206.3" width="1" height="1.3" fill="#b0a070"/><rect x="45" y="206.3" width="1" height="1.3" fill="#cccccc"/><rect x="0" y="208.3" width="1" height="1.3" fill="#dcdcaa"/><rect x="1" y="208.3" width="1" height="1.3" fill="#b0a070"/><rect x="2" y="208.3" width="9" height="1.3" fill="#ce9178"/><rect x="11" y="208.3" width="1" height="1.3" fill="#b0a070"/><rect x="12" y="208.3" width="1" height="1.3" fill="#cccccc"/><rect x="13" y="208.3" width="8" height="1.3" fill="#dcdcaa"/><rect x="21" y="208.3" width="1" height="1.3" fill="#b0a070"/><rect x="22" y="208.3" width="5" height="1.3" fill="#ce9178"/><rect x="27" y="208.3" width="1" height="1.3" fill="#b0a070"/><rect x="28" y="208.3" width="1" height="1.3" fill="#cccccc"/><rect x="29" y="208.3" width="2" height="1.3" fill="#dcdcaa"/><rect x="31" y="208.3" width="1" height="1.3" fill="#b0a070"/><rect x="32" y="208.3" width="3" height="1.3" fill="#9cdcfe"/><rect x="35" y="208.3" width="1" height="1.3" fill="#b0a070"/><rect x="36" y="208.3" width="1" height="1.3" fill="#cccccc"/><rect x="37" y="208.3" width="3" height="1.3" fill="#dcdcaa"/><rect x="40" y="208.3" width="1" height="1.3" fill="#b0a070"/><rect x="41" y="208.3" width="7" height="1.3" fill="#ce9178"/><rect x="48" y="208.3" width="1" height="1.3" fill="#cccccc"/><rect x="49" y="208.3" width="5" height="1.3" fill="#ce9178"/><rect x="54" y="208.3" width="1" height="1.3" fill="#b0a070"/><rect x="55" y="208.3" width="1" height="1.3" fill="#cccccc"/><rect x="0" y="210.3" width="1" height="1.3" fill="#b0a070"/><rect x="1" y="210.3" width="1" height="1.3" fill="#b0a070"/><rect x="2" y="210.3" width="1" height="1.3" fill="#cccccc"/><rect x="0" y="212.3" width="8" height="1.3" fill="#6a9955"/><rect x="0" y="214.3" width="1" height="1.3" fill="#dcdcaa"/><rect x="1" y="214.3" width="1" height="1.3" fill="#b0a070"/><rect x="2" y="214.3" width="9" height="1.3" fill="#ce9178"/><rect x="11" y="214.3" width="1" height="1.3" fill="#b0a070"/><rect x="12" y="214.3" width="1" height="1.3" fill="#cccccc"/><rect x="13" y="214.3" width="2" height="1.3" fill="#dcdcaa"/><rect x="15" y="214.3" width="1" height="1.3" fill="#b0a070"/><rect x="16" y="214.3" width="7" height="1.3" fill="#ce9178"/><rect x="23" y="214.3" width="1" height="1.3" fill="#cccccc"/><rect x="24" y="214.3" width="1" height="1.3" fill="#b0a070"/><rect x="25" y="214.3" width="1" height="1.3" fill="#9cdcfe"/><rect x="26" y="214.3" width="1" height="1.3" fill="#b0a070"/><rect x="28" y="214.3" width="2" height="1.3" fill="#569cd6"/><rect x="30" y="214.3" width="1" height="1.3" fill="#b0a070"/><rect x="4" y="216.3" width="5" height="1.3" fill="#569cd6"/><rect x="10" y="216.3" width="6" height="1.3" fill="#9cdcfe"/><rect x="17" y="216.3" width="1" height="1.3" fill="#cccccc"/><rect x="19" y="216.3" width="2" height="1.3" fill="#b5cea8"/><rect x="21" y="216.3" width="1" height="1.3" fill="#cccccc"/><rect x="4" y="220.3" width="2" height="1.3" fill="#c586c0"/><rect x="6" y="220.3" width="1" height="1.3" fill="#b0a070"/><rect x="7" y="220.3" width="7" height="1.3" fill="#9cdcfe"/><rect x="15" y="220.3" width="1" height="1.3" fill="#cccccc"/><rect x="16" y="220.3" width="1" height="1.3" fill="#cccccc"/><rect x="18" y="220.3" width="7" height="1.3" fill="#9cdcfe"/><rect x="25" y="220.3" width="1" height="1.3" fill="#b0a070"/><rect x="27" y="220.3" width="1" height="1.3" fill="#b0a070"/><rect x="8" y="222.3" width="5" height="1.3" fill="#dcdcaa"/><rect x="13" y="222.3" width="1" height="1.3" fill="#b0a070"/><rect x="14" y="222.3" width="7" height="1.3" fill="#9cdcfe"/><rect x="21" y="222.3" width="1" height="1.3" fill="#cccccc"/><rect x="22" y="222.3" width="19" height="1.3" fill="#ce9178"/><rect x="41" y="222.3" width="1" height="1.3" fill="#b0a070"/><rect x="42" y="222.3" width="1" height="1.3" fill="#cccccc"/><rect x="4" y="224.3" width="1" height="1.3" fill="#b0a070"/><rect x="4" y="226.3" width="4" height="1.3" fill="#c586c0"/><rect x="9" y="226.3" width="2" height="1.3" fill="#c586c0"/><rect x="11" y="226.3" width="1" height="1.3" fill="#b0a070"/><rect x="12" y="226.3" width="7" height="1.3" fill="#9cdcfe"/><rect x="20" y="226.3" width="1" height="1.3" fill="#cccccc"/><rect x="21" y="226.3" width="1" height="1.3" fill="#cccccc"/><rect x="23" y="226.3" width="7" height="1.3" fill="#9cdcfe"/><rect x="30" y="226.3" width="1" height="1.3" fill="#b0a070"/><rect x="32" y="226.3" width="1" height="1.3" fill="#b0a070"/><rect x="8" y="228.3" width="5" height="1.3" fill="#dcdcaa"/><rect x="13" y="228.3" width="1" height="1.3" fill="#b0a070"/><rect x="14" y="228.3" width="7" height="1.3" fill="#9cdcfe"/><rect x="21" y="228.3" width="1" height="1.3" fill="#cccccc"/><rect x="22" y="228.3" width="21" height="1.3" fill="#ce9178"/><rect x="43" y="228.3" width="1" height="1.3" fill="#b0a070"/><rect x="44" y="228.3" width="1" height="1.3" fill="#cccccc"/><rect x="4" y="230.3" width="1" height="1.3" fill="#b0a070"/><rect x="4" y="232.3" width="4" height="1.3" fill="#c586c0"/><rect x="9" y="232.3" width="2" height="1.3" fill="#c586c0"/><rect x="11" y="232.3" width="1" height="1.3" fill="#b0a070"/><rect x="12" y="232.3" width="7" height="1.3" fill="#9cdcfe"/><rect x="20" y="232.3" width="1" height="1.3" fill="#cccccc"/><rect x="21" y="232.3" width="1" height="1.3" fill="#cccccc"/><rect x="23" y="232.3" width="7" height="1.3" fill="#9cdcfe"/><rect x="30" y="232.3" width="1" height="1.3" fill="#b0a070"/><rect x="32" y="232.3" width="1" height="1.3" fill="#b0a070"/><rect x="8" y="234.3" width="5" height="1.3" fill="#dcdcaa"/><rect x="13" y="234.3" width="1" height="1.3" fill="#b0a070"/><rect x="14" y="234.3" width="7" height="1.3" fill="#9cdcfe"/><rect x="21" y="234.3" width="1" height="1.3" fill="#cccccc"/><rect x="22" y="234.3" width="20" height="1.3" fill="#ce9178"/><rect x="42" y="234.3" width="1" height="1.3" fill="#b0a070"/><rect x="43" y="234.3" width="1" height="1.3" fill="#cccccc"/><rect x="4" y="236.3" width="1" height="1.3" fill="#b0a070"/><rect x="4" y="238.3" width="4" height="1.3" fill="#c586c0"/><rect x="9" y="238.3" width="2" height="1.3" fill="#c586c0"/><rect x="11" y="238.3" width="1" height="1.3" fill="#b0a070"/><rect x="12" y="238.3" width="7" height="1.3" fill="#9cdcfe"/><rect x="20" y="238.3" width="1" height="1.3" fill="#cccccc"/><rect x="21" y="238.3" width="1" height="1.3" fill="#cccccc"/><rect x="23" y="238.3" width="7" height="1.3" fill="#9cdcfe"/><rect x="30" y="238.3" width="1" height="1.3" fill="#b0a070"/><rect x="32" y="238.3" width="1" height="1.3" fill="#b0a070"/><rect x="8" y="240.3" width="5" height="1.3" fill="#dcdcaa"/><rect x="13" y="240.3" width="1" height="1.3" fill="#b0a070"/><rect x="14" y="240.3" width="7" height="1.3" fill="#9cdcfe"/><rect x="21" y="240.3" width="1" height="1.3" fill="#cccccc"/><rect x="22" y="240.3" width="20" height="1.3" fill="#ce9178"/><rect x="42" y="240.3" width="1" height="1.3" fill="#b0a070"/><rect x="43" y="240.3" width="1" height="1.3" fill="#cccccc"/><rect x="4" y="242.3" width="1" height="1.3" fill="#b0a070"/><rect x="4" y="244.3" width="4" height="1.3" fill="#c586c0"/><rect x="9" y="244.3" width="2" height="1.3" fill="#c586c0"/><rect x="11" y="244.3" width="1" height="1.3" fill="#b0a070"/><rect x="12" y="244.3" width="7" height="1.3" fill="#9cdcfe"/><rect x="20" y="244.3" width="1" height="1.3" fill="#cccccc"/><rect x="21" y="244.3" width="1" height="1.3" fill="#cccccc"/><rect x="23" y="244.3" width="7" height="1.3" fill="#9cdcfe"/><rect x="30" y="244.3" width="1" height="1.3" fill="#b0a070"/><rect x="32" y="244.3" width="1" height="1.3" fill="#b0a070"/><rect x="8" y="246.3" width="5" height="1.3" fill="#dcdcaa"/><rect x="13" y="246.3" width="1" height="1.3" fill="#b0a070"/><rect x="14" y="246.3" width="7" height="1.3" fill="#9cdcfe"/><rect x="21" y="246.3" width="1" height="1.3" fill="#cccccc"/><rect x="22" y="246.3" width="19" height="1.3" fill="#ce9178"/><rect x="41" y="246.3" width="1" height="1.3" fill="#b0a070"/><rect x="42" y="246.3" width="1" height="1.3" fill="#cccccc"/><rect x="4" y="248.3" width="1" height="1.3" fill="#b0a070"/><rect x="4" y="250.3" width="4" height="1.3" fill="#c586c0"/><rect x="9" y="250.3" width="2" height="1.3" fill="#c586c0"/><rect x="11" y="250.3" width="1" height="1.3" fill="#b0a070"/><rect x="12" y="250.3" width="7" height="1.3" fill="#9cdcfe"/><rect x="20" y="250.3" width="1" height="1.3" fill="#cccccc"/><rect x="21" y="250.3" width="1" height="1.3" fill="#cccccc"/><rect x="23" y="250.3" width="7" height="1.3" fill="#9cdcfe"/><rect x="30" y="250.3" width="1" height="1.3" fill="#b0a070"/><rect x="32" y="250.3" width="1" height="1.3" fill="#b0a070"/><rect x="8" y="252.3" width="5" height="1.3" fill="#dcdcaa"/><rect x="13" y="252.3" width="1" height="1.3" fill="#b0a070"/><rect x="14" y="252.3" width="7" height="1.3" fill="#9cdcfe"/><rect x="21" y="252.3" width="1" height="1.3" fill="#cccccc"/><rect x="22" y="252.3" width="19" height="1.3" fill="#ce9178"/><rect x="41" y="252.3" width="1" height="1.3" fill="#b0a070"/><rect x="42" y="252.3" width="1" height="1.3" fill="#cccccc"/><rect x="4" y="254.3" width="1" height="1.3" fill="#b0a070"/><rect x="4" y="256.4" width="4" height="1.3" fill="#c586c0"/><rect x="9" y="256.4" width="2" height="1.3" fill="#c586c0"/><rect x="11" y="256.4" width="1" height="1.3" fill="#b0a070"/><rect x="12" y="256.4" width="7" height="1.3" fill="#9cdcfe"/><rect x="20" y="256.4" width="1" height="1.3" fill="#cccccc"/><rect x="21" y="256.4" width="1" height="1.3" fill="#cccccc"/><rect x="23" y="256.4" width="7" height="1.3" fill="#9cdcfe"/><rect x="30" y="256.4" width="1" height="1.3" fill="#b0a070"/><rect x="32" y="256.4" width="1" height="1.3" fill="#b0a070"/><rect x="8" y="258.4" width="5" height="1.3" fill="#dcdcaa"/><rect x="13" y="258.4" width="1" height="1.3" fill="#b0a070"/><rect x="14" y="258.4" width="7" height="1.3" fill="#9cdcfe"/><rect x="21" y="258.4" width="1" height="1.3" fill="#cccccc"/><rect x="22" y="258.4" width="26" height="1.3" fill="#ce9178"/><rect x="48" y="258.4" width="1" height="1.3" fill="#b0a070"/><rect x="49" y="258.4" width="1" height="1.3" fill="#cccccc"/><rect x="4" y="260.4" width="1" height="1.3" fill="#b0a070"/><rect x="4" y="262.4" width="4" height="1.3" fill="#c586c0"/><rect x="9" y="262.4" width="2" height="1.3" fill="#c586c0"/><rect x="11" y="262.4" width="1" height="1.3" fill="#b0a070"/><rect x="12" y="262.4" width="7" height="1.3" fill="#9cdcfe"/><rect x="20" y="262.4" width="1" height="1.3" fill="#cccccc"/><rect x="21" y="262.4" width="1" height="1.3" fill="#cccccc"/><rect x="23" y="262.4" width="7" height="1.3" fill="#9cdcfe"/><rect x="30" y="262.4" width="1" height="1.3" fill="#b0a070"/><rect x="32" y="262.4" width="1" height="1.3" fill="#b0a070"/><rect x="8" y="264.4" width="5" height="1.3" fill="#dcdcaa"/><rect x="13" y="264.4" width="1" height="1.3" fill="#b0a070"/><rect x="14" y="264.4" width="7" height="1.3" fill="#9cdcfe"/><rect x="21" y="264.4" width="1" height="1.3" fill="#cccccc"/><rect x="22" y="264.4" width="23" height="1.3" fill="#ce9178"/><rect x="45" y="264.4" width="1" height="1.3" fill="#b0a070"/><rect x="46" y="264.4" width="1" height="1.3" fill="#cccccc"/><rect x="4" y="266.4" width="1" height="1.3" fill="#b0a070"/><rect x="4" y="268.4" width="4" height="1.3" fill="#c586c0"/><rect x="9" y="268.4" width="2" height="1.3" fill="#c586c0"/><rect x="11" y="268.4" width="1" height="1.3" fill="#b0a070"/><rect x="12" y="268.4" width="3" height="1.3" fill="#9cdcfe"/><rect x="16" y="268.4" width="1" height="1.3" fill="#cccccc"/><rect x="17" y="268.4" width="1" height="1.3" fill="#cccccc"/><rect x="19" y="268.4" width="3" height="1.3" fill="#b5cea8"/><rect x="22" y="268.4" width="1" height="1.3" fill="#b0a070"/><rect x="24" y="268.4" width="1" height="1.3" fill="#b0a070"/><rect x="8" y="270.4" width="5" height="1.3" fill="#dcdcaa"/><rect x="13" y="270.4" width="1" height="1.3" fill="#b0a070"/><rect x="14" y="270.4" width="9" height="1.3" fill="#ce9178"/><rect x="23" y="270.4" width="1" height="1.3" fill="#b0a070"/><rect x="24" y="270.4" width="1" height="1.3" fill="#cccccc"/><rect x="4" y="272.4" width="1" height="1.3" fill="#b0a070"/><rect x="4" y="274.4" width="4" height="1.3" fill="#c586c0"/><rect x="9" y="274.4" width="1" height="1.3" fill="#b0a070"/><rect x="8" y="276.4" width="5" height="1.3" fill="#dcdcaa"/><rect x="13" y="276.4" width="1" height="1.3" fill="#b0a070"/><rect x="14" y="276.4" width="28" height="1.3" fill="#ce9178"/><rect x="42" y="276.4" width="1" height="1.3" fill="#b0a070"/><rect x="43" y="276.4" width="1" height="1.3" fill="#cccccc"/><rect x="4" y="278.4" width="1" height="1.3" fill="#b0a070"/><rect x="0" y="280.4" width="1" height="1.3" fill="#b0a070"/><rect x="1" y="280.4" width="1" height="1.3" fill="#b0a070"/><rect x="2" y="280.4" width="1" height="1.3" fill="#cccccc"/><rect x="0" y="282.4" width="8" height="1.3" fill="#6a9955"/><rect x="0" y="284.4" width="1" height="1.3" fill="#dcdcaa"/><rect x="1" y="284.4" width="1" height="1.3" fill="#b0a070"/><rect x="2" y="284.4" width="9" height="1.3" fill="#ce9178"/><rect x="11" y="284.4" width="1" height="1.3" fill="#b0a070"/><rect x="12" y="284.4" width="1" height="1.3" fill="#cccccc"/><rect x="13" y="284.4" width="2" height="1.3" fill="#dcdcaa"/><rect x="15" y="284.4" width="1" height="1.3" fill="#b0a070"/><rect x="16" y="284.4" width="7" height="1.3" fill="#ce9178"/><rect x="23" y="284.4" width="1" height="1.3" fill="#cccccc"/><rect x="24" y="284.4" width="1" height="1.3" fill="#b0a070"/><rect x="25" y="284.4" width="1" height="1.3" fill="#9cdcfe"/><rect x="26" y="284.4" width="1" height="1.3" fill="#b0a070"/><rect x="28" y="284.4" width="2" height="1.3" fill="#569cd6"/><rect x="30" y="284.4" width="1" height="1.3" fill="#b0a070"/><rect x="4" y="286.4" width="3" height="1.3" fill="#569cd6"/><rect x="8" y="286.4" width="3" height="1.3" fill="#9cdcfe"/><rect x="12" y="286.4" width="1" height="1.3" fill="#cccccc"/><rect x="14" y="286.4" width="1" height="1.3" fill="#b5cea8"/><rect x="15" y="286.4" width="1" height="1.3" fill="#cccccc"/><rect x="4" y="290.4" width="3" height="1.3" fill="#c586c0"/><rect x="7" y="290.4" width="1" height="1.3" fill="#b0a070"/><rect x="8" y="290.4" width="3" height="1.3" fill="#569cd6"/><rect x="12" y="290.4" width="1" height="1.3" fill="#9cdcfe"/><rect x="14" y="290.4" width="1" height="1.3" fill="#cccccc"/><rect x="16" y="290.4" width="1" height="1.3" fill="#b5cea8"/><rect x="17" y="290.4" width="1" height="1.3" fill="#cccccc"/><rect x="19" y="290.4" width="1" height="1.3" fill="#9cdcfe"/><rect x="21" y="290.4" width="1" height="1.3" fill="#cccccc"/><rect x="22" y="290.4" width="1" height="1.3" fill="#cccccc"/><rect x="24" y="290.4" width="2" height="1.3" fill="#b5cea8"/><rect x="26" y="290.4" width="1" height="1.3" fill="#cccccc"/><rect x="28" y="290.4" width="1" height="1.3" fill="#9cdcfe"/><rect x="29" y="290.4" width="1" height="1.3" fill="#cccccc"/><rect x="30" y="290.4" width="1" height="1.3" fill="#cccccc"/><rect x="31" y="290.4" width="1" height="1.3" fill="#b0a070"/><rect x="33" y="290.4" width="1" height="1.3" fill="#b0a070"/><rect x="8" y="292.4" width="3" height="1.3" fill="#9cdcfe"/><rect x="12" y="292.4" width="1" height="1.3" fill="#cccccc"/><rect x="13" y="292.4" width="1" height="1.3" fill="#cccccc"/><rect x="15" y="292.4" width="1" height="1.3" fill="#9cdcfe"/><rect x="16" y="292.4" width="1" height="1.3" fill="#cccccc"/><rect x="4" y="294.4" width="1" height="1.3" fill="#b0a070"/><rect x="4" y="296.4" width="1" height="1.3" fill="#dcdcaa"/><rect x="5" y="296.4" width="1" height="1.3" fill="#b0a070"/><rect x="6" y="296.4" width="1" height="1.3" fill="#9cdcfe"/><rect x="7" y="296.4" width="1" height="1.3" fill="#cccccc"/><rect x="8" y="296.4" width="13" height="1.3" fill="#9cdcfe"/><rect x="21" y="296.4" width="1" height="1.3" fill="#b0a070"/><rect x="22" y="296.4" width="1" height="1.3" fill="#cccccc"/><rect x="23" y="296.4" width="6" height="1.3" fill="#dcdcaa"/><rect x="29" y="296.4" width="1" height="1.3" fill="#b0a070"/><rect x="30" y="296.4" width="3" height="1.3" fill="#9cdcfe"/><rect x="33" y="296.4" width="1" height="1.3" fill="#b0a070"/><rect x="34" y="296.4" width="1" height="1.3" fill="#cccccc"/><rect x="0" y="298.4" width="1" height="1.3" fill="#b0a070"/><rect x="1" y="298.4" width="1" height="1.3" fill="#b0a070"/><rect x="2" y="298.4" width="1" height="1.3" fill="#cccccc"/><rect x="0" y="300.4" width="9" height="1.3" fill="#6a9955"/><rect x="0" y="302.4" width="1" height="1.3" fill="#dcdcaa"/><rect x="1" y="302.4" width="1" height="1.3" fill="#b0a070"/><rect x="2" y="302.4" width="10" height="1.3" fill="#ce9178"/><rect x="12" y="302.4" width="1" height="1.3" fill="#b0a070"/><rect x="13" y="302.4" width="1" height="1.3" fill="#cccccc"/><rect x="14" y="302.4" width="2" height="1.3" fill="#dcdcaa"/><rect x="16" y="302.4" width="1" height="1.3" fill="#b0a070"/><rect x="17" y="302.4" width="7" height="1.3" fill="#ce9178"/><rect x="24" y="302.4" width="1" height="1.3" fill="#cccccc"/><rect x="25" y="302.4" width="1" height="1.3" fill="#b0a070"/><rect x="26" y="302.4" width="1" height="1.3" fill="#9cdcfe"/><rect x="27" y="302.4" width="1" height="1.3" fill="#b0a070"/><rect x="29" y="302.4" width="2" height="1.3" fill="#569cd6"/><rect x="31" y="302.4" width="1" height="1.3" fill="#b0a070"/><rect x="4" y="304.4" width="5" height="1.3" fill="#569cd6"/><rect x="10" y="304.4" width="5" height="1.3" fill="#9cdcfe"/><rect x="16" y="304.4" width="1" height="1.3" fill="#cccccc"/><rect x="18" y="304.4" width="1" height="1.3" fill="#b0a070"/><rect x="19" y="304.4" width="1" height="1.3" fill="#b5cea8"/><rect x="20" y="304.4" width="1" height="1.3" fill="#cccccc"/><rect x="21" y="304.4" width="1" height="1.3" fill="#b5cea8"/><rect x="22" y="304.4" width="1" height="1.3" fill="#b0a070"/><rect x="23" y="304.4" width="1" height="1.3" fill="#cccccc"/><rect x="4" y="308.4" width="3" height="1.3" fill="#c586c0"/><rect x="7" y="308.4" width="1" height="1.3" fill="#b0a070"/><rect x="8" y="308.4" width="3" height="1.3" fill="#569cd6"/><rect x="12" y="308.4" width="1" height="1.3" fill="#9cdcfe"/><rect x="14" y="308.4" width="1" height="1.3" fill="#cccccc"/><rect x="16" y="308.4" width="1" height="1.3" fill="#b5cea8"/><rect x="17" y="308.4" width="1" height="1.3" fill="#cccccc"/><rect x="19" y="308.4" width="1" height="1.3" fill="#9cdcfe"/><rect x="21" y="308.4" width="1" height="1.3" fill="#cccccc"/><rect x="23" y="308.4" width="1" height="1.3" fill="#b5cea8"/><rect x="24" y="308.4" width="1" height="1.3" fill="#cccccc"/><rect x="26" y="308.4" width="1" height="1.3" fill="#9cdcfe"/><rect x="27" y="308.4" width="1" height="1.3" fill="#cccccc"/><rect x="28" y="308.4" width="1" height="1.3" fill="#cccccc"/><rect x="29" y="308.4" width="1" height="1.3" fill="#b0a070"/><rect x="31" y="308.4" width="1" height="1.3" fill="#b0a070"/><rect x="8" y="310.4" width="5" height="1.3" fill="#9cdcfe"/><rect x="13" y="310.4" width="1" height="1.3" fill="#cccccc"/><rect x="14" y="310.4" width="4" height="1.3" fill="#dcdcaa"/><rect x="18" y="310.4" width="1" height="1.3" fill="#b0a070"/><rect x="19" y="310.4" width="1" height="1.3" fill="#9cdcfe"/><rect x="20" y="310.4" width="1" height="1.3" fill="#b0a070"/><rect x="21" y="310.4" width="1" height="1.3" fill="#cccccc"/><rect x="4" y="312.4" width="1" height="1.3" fill="#b0a070"/><rect x="4" y="314.4" width="5" height="1.3" fill="#9cdcfe"/><rect x="9" y="314.4" width="1" height="1.3" fill="#cccccc"/><rect x="10" y="314.4" width="7" height="1.3" fill="#dcdcaa"/><rect x="17" y="314.4" width="1" height="1.3" fill="#b0a070"/><rect x="18" y="314.4" width="1" height="1.3" fill="#b0a070"/><rect x="19" y="314.4" width="1" height="1.3" fill="#cccccc"/><rect x="4" y="316.4" width="7" height="1.3" fill="#9cdcfe"/><rect x="11" y="316.4" width="1" height="1.3" fill="#cccccc"/><rect x="12" y="316.4" width="3" height="1.3" fill="#dcdcaa"/><rect x="15" y="316.4" width="1" height="1.3" fill="#b0a070"/><rect x="16" y="316.4" width="5" height="1.3" fill="#9cdcfe"/><rect x="21" y="316.4" width="1" height="1.3" fill="#b0a070"/><rect x="22" y="316.4" width="1" height="1.3" fill="#cccccc"/><rect x="0" y="318.4" width="1" height="1.3" fill="#b0a070"/><rect x="1" y="318.4" width="1" height="1.3" fill="#b0a070"/><rect x="2" y="318.4" width="1" height="1.3" fill="#cccccc"/><rect x="0" y="320.4" width="9" height="1.3" fill="#6a9955"/><rect x="0" y="322.4" width="1" height="1.3" fill="#dcdcaa"/><rect x="1" y="322.4" width="1" height="1.3" fill="#b0a070"/><rect x="2" y="322.4" width="10" height="1.3" fill="#ce9178"/><rect x="12" y="322.4" width="1" height="1.3" fill="#b0a070"/><rect x="13" y="322.4" width="1" height="1.3" fill="#cccccc"/><rect x="14" y="322.4" width="2" height="1.3" fill="#dcdcaa"/><rect x="16" y="322.4" width="1" height="1.3" fill="#b0a070"/><rect x="17" y="322.4" width="7" height="1.3" fill="#ce9178"/><rect x="24" y="322.4" width="1" height="1.3" fill="#cccccc"/><rect x="25" y="322.4" width="1" height="1.3" fill="#b0a070"/><rect x="26" y="322.4" width="1" height="1.3" fill="#9cdcfe"/><rect x="27" y="322.4" width="1" height="1.3" fill="#b0a070"/><rect x="29" y="322.4" width="2" height="1.3" fill="#569cd6"/><rect x="31" y="322.4" width="1" height="1.3" fill="#b0a070"/><rect x="4" y="324.4" width="5" height="1.3" fill="#569cd6"/><rect x="10" y="324.4" width="4" height="1.3" fill="#9cdcfe"/><rect x="15" y="324.4" width="1" height="1.3" fill="#cccccc"/><rect x="17" y="324.4" width="3" height="1.3" fill="#569cd6"/><rect x="21" y="324.4" width="4" height="1.3" fill="#dcdcaa"/><rect x="25" y="324.4" width="1" height="1.3" fill="#b0a070"/><rect x="26" y="324.4" width="1" height="1.3" fill="#b0a070"/><rect x="27" y="324.4" width="1" height="1.3" fill="#cccccc"/><rect x="4" y="326.4" width="4" height="1.3" fill="#9cdcfe"/><rect x="9" y="326.4" width="1" height="1.3" fill="#cccccc"/><rect x="11" y="326.4" width="3" height="1.3" fill="#569cd6"/><rect x="15" y="326.4" width="4" height="1.3" fill="#dcdcaa"/><rect x="19" y="326.4" width="1" height="1.3" fill="#b0a070"/><rect x="20" y="326.4" width="4" height="1.3" fill="#b5cea8"/><rect x="24" y="326.4" width="1" height="1.3" fill="#b0a070"/><rect x="25" y="326.4" width="1" height="1.3" fill="#cccccc"/><rect x="4" y="330.4" width="7" height="1.3" fill="#9cdcfe"/><rect x="11" y="330.4" width="1" height="1.3" fill="#cccccc"/><rect x="12" y="330.4" width="3" height="1.3" fill="#dcdcaa"/><rect x="15" y="330.4" width="1" height="1.3" fill="#b0a070"/><rect x="16" y="330.4" width="4" height="1.3" fill="#9cdcfe"/><rect x="20" y="330.4" width="1" height="1.3" fill="#cccccc"/><rect x="21" y="330.4" width="11" height="1.3" fill="#dcdcaa"/><rect x="32" y="330.4" width="1" height="1.3" fill="#b0a070"/><rect x="33" y="330.4" width="1" height="1.3" fill="#b0a070"/><rect x="34" y="330.4" width="1" height="1.3" fill="#b0a070"/><rect x="35" y="330.4" width="1" height="1.3" fill="#cccccc"/><rect x="4" y="332.4" width="7" height="1.3" fill="#9cdcfe"/><rect x="11" y="332.4" width="1" height="1.3" fill="#cccccc"/><rect x="12" y="332.4" width="3" height="1.3" fill="#dcdcaa"/><rect x="15" y="332.4" width="1" height="1.3" fill="#b0a070"/><rect x="16" y="332.4" width="4" height="1.3" fill="#9cdcfe"/><rect x="20" y="332.4" width="1" height="1.3" fill="#cccccc"/><rect x="21" y="332.4" width="8" height="1.3" fill="#dcdcaa"/><rect x="29" y="332.4" width="1" height="1.3" fill="#b0a070"/><rect x="30" y="332.4" width="1" height="1.3" fill="#b0a070"/><rect x="31" y="332.4" width="1" height="1.3" fill="#b0a070"/><rect x="32" y="332.4" width="1" height="1.3" fill="#cccccc"/><rect x="4" y="334.4" width="7" height="1.3" fill="#9cdcfe"/><rect x="11" y="334.4" width="1" height="1.3" fill="#cccccc"/><rect x="12" y="334.4" width="3" height="1.3" fill="#dcdcaa"/><rect x="15" y="334.4" width="1" height="1.3" fill="#b0a070"/><rect x="16" y="334.4" width="4" height="1.3" fill="#9cdcfe"/><rect x="20" y="334.4" width="1" height="1.3" fill="#cccccc"/><rect x="21" y="334.4" width="6" height="1.3" fill="#dcdcaa"/><rect x="27" y="334.4" width="1" height="1.3" fill="#b0a070"/><rect x="28" y="334.4" width="1" height="1.3" fill="#b0a070"/><rect x="29" y="334.4" width="1" height="1.3" fill="#b0a070"/><rect x="30" y="334.4" width="1" height="1.3" fill="#cccccc"/><rect x="4" y="336.4" width="7" height="1.3" fill="#9cdcfe"/><rect x="11" y="336.4" width="1" height="1.3" fill="#cccccc"/><rect x="12" y="336.4" width="3" height="1.3" fill="#dcdcaa"/><rect x="15" y="336.4" width="1" height="1.3" fill="#b0a070"/><rect x="16" y="336.4" width="4" height="1.3" fill="#9cdcfe"/><rect x="20" y="336.4" width="1" height="1.3" fill="#cccccc"/><rect x="21" y="336.4" width="7" height="1.3" fill="#dcdcaa"/><rect x="28" y="336.4" width="1" height="1.3" fill="#b0a070"/><rect x="29" y="336.4" width="1" height="1.3" fill="#b0a070"/><rect x="30" y="336.4" width="1" height="1.3" fill="#b0a070"/><rect x="31" y="336.4" width="1" height="1.3" fill="#cccccc"/><rect x="0" y="338.4" width="1" height="1.3" fill="#b0a070"/><rect x="1" y="338.4" width="1" height="1.3" fill="#b0a070"/><rect x="2" y="338.4" width="1" height="1.3" fill="#cccccc"/><rect x="0" y="340.4" width="10" height="1.3" fill="#6a9955"/><rect x="0" y="342.4" width="1" height="1.3" fill="#dcdcaa"/><rect x="1" y="342.4" width="1" height="1.3" fill="#b0a070"/><rect x="2" y="342.4" width="10" height="1.3" fill="#ce9178"/><rect x="12" y="342.4" width="1" height="1.3" fill="#b0a070"/><rect x="13" y="342.4" width="1" height="1.3" fill="#cccccc"/><rect x="14" y="342.4" width="2" height="1.3" fill="#dcdcaa"/><rect x="16" y="342.4" width="1" height="1.3" fill="#b0a070"/><rect x="17" y="342.4" width="7" height="1.3" fill="#ce9178"/><rect x="24" y="342.4" width="1" height="1.3" fill="#cccccc"/><rect x="25" y="342.4" width="1" height="1.3" fill="#b0a070"/><rect x="26" y="342.4" width="1" height="1.3" fill="#9cdcfe"/><rect x="27" y="342.4" width="1" height="1.3" fill="#b0a070"/><rect x="29" y="342.4" width="2" height="1.3" fill="#569cd6"/><rect x="31" y="342.4" width="1" height="1.3" fill="#b0a070"/><rect x="4" y="344.4" width="3" height="1.3" fill="#569cd6"/><rect x="8" y="344.4" width="7" height="1.3" fill="#9cdcfe"/><rect x="16" y="344.4" width="1" height="1.3" fill="#cccccc"/><rect x="18" y="344.4" width="8" height="1.3" fill="#9cdcfe"/><rect x="26" y="344.4" width="1" height="1.3" fill="#cccccc"/><rect x="27" y="344.4" width="14" height="1.3" fill="#dcdcaa"/><rect x="41" y="344.4" width="1" height="1.3" fill="#b0a070"/><rect x="42" y="344.4" width="9" height="1.3" fill="#ce9178"/><rect x="51" y="344.4" width="1" height="1.3" fill="#b0a070"/><rect x="52" y="344.4" width="1" height="1.3" fill="#cccccc"/><rect x="4" y="346.4" width="3" height="1.3" fill="#569cd6"/><rect x="8" y="346.4" width="11" height="1.3" fill="#9cdcfe"/><rect x="20" y="346.4" width="1" height="1.3" fill="#cccccc"/><rect x="22" y="346.4" width="1" height="1.3" fill="#dcdcaa"/><rect x="23" y="346.4" width="1" height="1.3" fill="#b0a070"/><rect x="24" y="346.4" width="1" height="1.3" fill="#9cdcfe"/><rect x="25" y="346.4" width="1" height="1.3" fill="#cccccc"/><rect x="26" y="346.4" width="12" height="1.3" fill="#9cdcfe"/><rect x="38" y="346.4" width="1" height="1.3" fill="#b0a070"/><rect x="39" y="346.4" width="1" height="1.3" fill="#cccccc"/><rect x="40" y="346.4" width="4" height="1.3" fill="#dcdcaa"/><rect x="44" y="346.4" width="1" height="1.3" fill="#b0a070"/><rect x="45" y="346.4" width="7" height="1.3" fill="#ce9178"/><rect x="52" y="346.4" width="1" height="1.3" fill="#b0a070"/><rect x="53" y="346.4" width="1" height="1.3" fill="#cccccc"/><rect x="8" y="348.4" width="7" height="1.3" fill="#9cdcfe"/><rect x="15" y="348.4" width="1" height="1.3" fill="#cccccc"/><rect x="16" y="348.4" width="5" height="1.3" fill="#4fc1ff"/><rect x="21" y="348.4" width="1" height="1.3" fill="#cccccc"/><rect x="22" y="348.4" width="5" height="1.3" fill="#dcdcaa"/><rect x="27" y="348.4" width="1" height="1.3" fill="#b0a070"/><rect x="28" y="348.4" width="11" height="1.3" fill="#9cdcfe"/><rect x="39" y="348.4" width="1" height="1.3" fill="#b0a070"/><rect x="40" y="348.4" width="1" height="1.3" fill="#cccccc"/><rect x="0" y="350.4" width="1" height="1.3" fill="#b0a070"/><rect x="1" y="350.4" width="1" height="1.3" fill="#b0a070"/><rect x="2" y="350.4" width="1" height="1.3" fill="#cccccc"/><rect x="0" y="352.4" width="1" height="1.3" fill="#dcdcaa"/><rect x="1" y="352.4" width="1" height="1.3" fill="#b0a070"/><rect x="2" y="352.4" width="10" height="1.3" fill="#ce9178"/><rect x="12" y="352.4" width="1" height="1.3" fill="#b0a070"/><rect x="13" y="352.4" width="1" height="1.3" fill="#cccccc"/><rect x="14" y="352.4" width="2" height="1.3" fill="#dcdcaa"/><rect x="16" y="352.4" width="1" height="1.3" fill="#b0a070"/><rect x="17" y="352.4" width="7" height="1.3" fill="#ce9178"/><rect x="24" y="352.4" width="1" height="1.3" fill="#cccccc"/><rect x="25" y="352.4" width="1" height="1.3" fill="#b0a070"/><rect x="26" y="352.4" width="1" height="1.3" fill="#9cdcfe"/><rect x="27" y="352.4" width="1" height="1.3" fill="#b0a070"/><rect x="29" y="352.4" width="2" height="1.3" fill="#569cd6"/><rect x="31" y="352.4" width="1" height="1.3" fill="#b0a070"/><rect x="4" y="354.4" width="3" height="1.3" fill="#569cd6"/><rect x="8" y="354.4" width="7" height="1.3" fill="#9cdcfe"/><rect x="16" y="354.4" width="1" height="1.3" fill="#cccccc"/><rect x="18" y="354.4" width="8" height="1.3" fill="#9cdcfe"/><rect x="26" y="354.4" width="1" height="1.3" fill="#cccccc"/><rect x="27" y="354.4" width="14" height="1.3" fill="#dcdcaa"/><rect x="41" y="354.4" width="1" height="1.3" fill="#b0a070"/><rect x="42" y="354.4" width="9" height="1.3" fill="#ce9178"/><rect x="51" y="354.4" width="1" height="1.3" fill="#b0a070"/><rect x="52" y="354.4" width="1" height="1.3" fill="#cccccc"/><rect x="4" y="356.4" width="3" height="1.3" fill="#569cd6"/><rect x="8" y="356.4" width="11" height="1.3" fill="#9cdcfe"/><rect x="20" y="356.4" width="1" height="1.3" fill="#cccccc"/><rect x="22" y="356.4" width="1" height="1.3" fill="#dcdcaa"/><rect x="23" y="356.4" width="1" height="1.3" fill="#b0a070"/><rect x="24" y="356.4" width="1" height="1.3" fill="#9cdcfe"/><rect x="25" y="356.4" width="1" height="1.3" fill="#cccccc"/><rect x="26" y="356.4" width="12" height="1.3" fill="#9cdcfe"/><rect x="38" y="356.4" width="1" height="1.3" fill="#b0a070"/><rect x="39" y="356.4" width="1" height="1.3" fill="#cccccc"/><rect x="40" y="356.4" width="4" height="1.3" fill="#dcdcaa"/><rect x="44" y="356.4" width="1" height="1.3" fill="#b0a070"/><rect x="45" y="356.4" width="7" height="1.3" fill="#ce9178"/><rect x="52" y="356.4" width="1" height="1.3" fill="#b0a070"/><rect x="53" y="356.4" width="1" height="1.3" fill="#cccccc"/><rect x="8" y="358.4" width="7" height="1.3" fill="#9cdcfe"/><rect x="15" y="358.4" width="1" height="1.3" fill="#cccccc"/><rect x="16" y="358.4" width="5" height="1.3" fill="#4fc1ff"/><rect x="21" y="358.4" width="1" height="1.3" fill="#cccccc"/><rect x="22" y="358.4" width="5" height="1.3" fill="#dcdcaa"/><rect x="27" y="358.4" width="1" height="1.3" fill="#b0a070"/><rect x="28" y="358.4" width="11" height="1.3" fill="#9cdcfe"/><rect x="39" y="358.4" width="1" height="1.3" fill="#b0a070"/><rect x="40" y="358.4" width="1" height="1.3" fill="#cccccc"/><rect x="0" y="360.4" width="1" height="1.3" fill="#b0a070"/><rect x="1" y="360.4" width="1" height="1.3" fill="#b0a070"/><rect x="2" y="360.4" width="1" height="1.3" fill="#cccccc"/><rect x="0" y="362.4" width="8" height="1.3" fill="#569cd6"/><rect x="9" y="362.4" width="11" height="1.3" fill="#dcdcaa"/><rect x="20" y="362.4" width="1" height="1.3" fill="#b0a070"/><rect x="21" y="362.4" width="6" height="1.3" fill="#9cdcfe"/><rect x="27" y="362.4" width="1" height="1.3" fill="#b0a070"/><rect x="28" y="362.4" width="1" height="1.3" fill="#b0a070"/><rect x="4" y="364.4" width="6" height="1.3" fill="#dcdcaa"/><rect x="10" y="364.4" width="1" height="1.3" fill="#b0a070"/><rect x="11" y="364.4" width="4" height="1.3" fill="#9cdcfe"/><rect x="15" y="364.4" width="1" height="1.3" fill="#b0a070"/><rect x="16" y="364.4" width="1" height="1.3" fill="#cccccc"/><rect x="0" y="366.4" width="1" height="1.3" fill="#b0a070"/><rect x="1" y="366.4" width="1" height="1.3" fill="#cccccc"/></g></svg>
<div class="a" style="left:1781px;top:140px;width:2px;height:2px;background:#0078d4"></div>
<div class="a" style="left:1781px;top:144px;width:2px;height:8px;background:#0078d4"></div>
<div class="a" style="left:1781px;top:154px;width:2px;height:12px;background:#0078d4"></div>
<div class="a" style="left:1781px;top:168px;width:2px;height:6px;background:#0078d4"></div>
<div class="a" style="left:1781px;top:176px;width:2px;height:12px;background:#0078d4"></div>
<div class="a" style="left:1781px;top:190px;width:2px;height:4px;background:#2ea043"></div>
<div class="a" style="left:1781px;top:196px;width:2px;height:6px;background:#2ea043"></div>
<div class="a" style="left:1781px;top:204px;width:2px;height:8px;background:#0078d4"></div>
<div class="a" style="left:1781px;top:214px;width:2px;height:4px;background:#2ea043"></div>
<div class="a" style="left:1781px;top:220px;width:2px;height:62px;background:#2ea043"></div>
<div class="a" style="left:1781px;top:284px;width:2px;height:4px;background:#2ea043"></div>
<div class="a" style="left:1781px;top:290px;width:2px;height:10px;background:#2ea043"></div>
<div class="a" style="left:1781px;top:302px;width:2px;height:4px;background:#2ea043"></div>
<div class="a" style="left:1781px;top:308px;width:2px;height:12px;background:#2ea043"></div>
<div class="a" style="left:1781px;top:322px;width:2px;height:6px;background:#2ea043"></div>
<div class="a" style="left:1781px;top:330px;width:2px;height:10px;background:#2ea043"></div>
<div class="a" style="left:1781px;top:342px;width:2px;height:26px;background:#0078d4"></div>
<div class="a" style="left:1899px;top:138px;width:1px;height:837px;background:#2b2b2b"></div>
<div class="a" style="left:1899px;top:137.5px;width:21px;height:1px;background:#2b2b2b"></div>
<div class="a" style="left:1900px;top:142.0px;width:6px;height:8.0px;background:#1b5fa0"></div>
<div class="a" style="left:1900px;top:155.0px;width:6px;height:23.0px;background:#1b5fa0"></div>
<div class="a" style="left:1900px;top:184.0px;width:6px;height:35.0px;background:#1b5fa0"></div>
<div class="a" style="left:1900px;top:225.0px;width:6px;height:18.0px;background:#1b5fa0"></div>
<div class="a" style="left:1900px;top:248.0px;width:6px;height:35.0px;background:#1b5fa0"></div>
<div class="a" style="left:1900px;top:289.0px;width:6px;height:12.0px;background:#2a7a38"></div>
<div class="a" style="left:1900px;top:307.0px;width:6px;height:16.0px;background:#2a7a38"></div>
<div class="a" style="left:1900px;top:330.0px;width:6px;height:23.0px;background:#1b5fa0"></div>
<div class="a" style="left:1900px;top:359.0px;width:6px;height:12.0px;background:#2a7a38"></div>
<div class="a" style="left:1900px;top:376.5px;width:6px;height:181.5px;background:#2a7a38"></div>
<div class="a" style="left:1900px;top:564.0px;width:6px;height:10.5px;background:#2a7a38"></div>
<div class="a" style="left:1900px;top:581.0px;width:6px;height:28.5px;background:#2a7a38"></div>
<div class="a" style="left:1900px;top:616.0px;width:6px;height:11.0px;background:#2a7a38"></div>
<div class="a" style="left:1900px;top:633.6px;width:6px;height:34.9px;background:#2a7a38"></div>
<div class="a" style="left:1900px;top:675.0px;width:6px;height:16.6px;background:#2a7a38"></div>
<div class="a" style="left:1900px;top:698.0px;width:6px;height:29.6px;background:#2a7a38"></div>
<div class="a" style="left:1900px;top:733.0px;width:6px;height:75.0px;background:#1b5fa0"></div>
<div class="a" style="left:1899px;top:712.6px;width:21px;height:171.3px;background:rgba(121,121,121,.4)"></div>
<div class="a" style="left:1900px;top:790px;width:20px;height:2.6px;background:#9a9a9a"></div>
<div class="a" style="left:1906px;top:792px;width:8px;height:6px;background:#a8a8a8"></div>
<div class="a" style="left:1906px;top:802px;width:8px;height:8px;background:#a8a8a8"></div>
<div id="status" class="a"></div>
<div class="a" style="left:0;top:977px;width:51px;height:31px;background:#0078d4"></div>
<svg style="left:18px;top:982px" width="16" height="20" viewBox="0 0 16 20"><path d="M1 6.5l5.5 5.5L1 17.5M15 1.5 9.5 7l5.5 5.5" stroke="#ffffff" stroke-width="1.6" fill="none"/></svg>
<svg style="left:61px;top:981px" width="19" height="22" viewBox="0 0 19 22"><circle cx="4" cy="4" r="2.9" stroke="#cccccc" stroke-width="1.6" fill="none"/><circle cx="4" cy="18" r="2.9" stroke="#cccccc" stroke-width="1.6" fill="none"/><circle cx="14.5" cy="7.5" r="2.9" stroke="#cccccc" stroke-width="1.6" fill="none"/><path d="M4 7v8M14.5 10.4c0 3-2.5 4-5 4S4 14.5 4 15" stroke="#cccccc" stroke-width="1.6" fill="none"/></svg>
<div id="t31" class="a tx" style="left:85.09px;top:977.77px;font-size:19.00px;line-height:28.50px;color:#cccccc;font-weight:normal;font-family:'Liberation Sans',sans-serif;transform:scaleX(0.9787);">main*</div>
<svg style="left:136px;top:978px" width="34" height="28" viewBox="0 0 34 28"><path d="M10.3 9.3A7.6 7.6 0 0 1 23.8 13.2M22.8 17.3A7.6 7.6 0 0 1 8.6 13.8" stroke="#cccccc" stroke-width="1.7" fill="none" stroke-linecap="round"/><path d="M20.6 12.2l3.2 3.2 3.2-3.2M5.4 14.8l3.2-3.2 3.2 3.2" stroke="#cccccc" stroke-width="1.8" fill="none" stroke-linecap="round" stroke-linejoin="round"/></svg>
<svg style="left:184px;top:981px" width="21" height="21" viewBox="0 0 21 21"><circle cx="10.5" cy="10.5" r="8.8" stroke="#cccccc" stroke-width="1.6" fill="none"/><path d="M6.8 6.8l7.4 7.4M14.2 6.8l-7.4 7.4" stroke="#cccccc" stroke-width="1.6"/></svg>
<div id="t32" class="a tx" style="left:209.55px;top:977.77px;font-size:19.00px;line-height:28.50px;color:#cccccc;font-weight:normal;font-family:'Liberation Sans',sans-serif;transform:scaleX(0.9000);">0</div>
<svg style="left:225px;top:982px" width="20" height="18" viewBox="0 0 20 18"><path d="M10 1.2 19 17H1z" stroke="#cccccc" stroke-width="1.6" fill="none" stroke-linejoin="round"/><path d="M10 6.5v5.5" stroke="#cccccc" stroke-width="1.8"/><circle cx="10" cy="14.2" r="1.1" fill="#cccccc"/></svg>
<div id="t33" class="a tx" style="left:250.64px;top:977.77px;font-size:19.00px;line-height:28.50px;color:#cccccc;font-weight:normal;font-family:'Liberation Sans',sans-serif;transform:scaleX(0.9000);">0</div>
<svg style="left:1183px;top:980px" width="13" height="22" viewBox="0 0 13 22"><circle cx="6.5" cy="11" r="4.2" stroke="#cccccc" stroke-width="1.7" fill="none"/><path d="M6.5 1v5.8M6.5 15.2V21" stroke="#cccccc" stroke-width="1.7"/></svg>
<div id="t34" class="a tx" style="left:1204.26px;top:977.77px;font-size:19.00px;line-height:28.50px;color:#cccccc;font-weight:normal;font-family:'Liberation Sans',sans-serif;transform:scaleX(0.9665);">Not Committed Yet</div>
<div id="t35" class="a tx" style="left:1381.80px;top:977.77px;font-size:19.00px;line-height:28.50px;color:#cccccc;font-weight:normal;font-family:'Liberation Sans',sans-serif;transform:scaleX(0.9165);">Ln 113, Col 30</div>
<div id="t36" class="a tx" style="left:1517.46px;top:977.77px;font-size:19.00px;line-height:28.50px;color:#cccccc;font-weight:normal;font-family:'Liberation Sans',sans-serif;transform:scaleX(0.8783);">Spaces: 4</div>
<div id="t37" class="a tx" style="left:1614.29px;top:977.77px;font-size:19.00px;line-height:28.50px;color:#cccccc;font-weight:normal;font-family:'Liberation Sans',sans-serif;transform:scaleX(0.9019);">UTF-8</div>
<div id="t38" class="a tx" style="left:1686.75px;top:977.77px;font-size:19.00px;line-height:28.50px;color:#cccccc;font-weight:normal;font-family:'Liberation Sans',sans-serif;transform:scaleX(0.8021);">CRLF</div>
<div id="t39" class="a tx" style="left:1749.00px;top:977.77px;font-size:19.00px;line-height:28.50px;color:#cccccc;font-weight:normal;font-family:'Liberation Sans',sans-serif;transform:scaleX(0.9278);">{ }</div>
<div id="t40" class="a tx" style="left:1776.44px;top:977.77px;font-size:19.00px;line-height:28.50px;color:#cccccc;font-weight:normal;font-family:'Liberation Sans',sans-serif;transform:scaleX(0.8888);">JavaScript</div>
<svg style="left:1879px;top:982px" width="16" height="19" viewBox="0 0 16 19"><path d="M8 1.5c-3.3 0-5.5 2.5-5.5 5.8v4.5L1 14.5h14l-1.5-2.7V7.3C13.5 4 11.3 1.5 8 1.5z" stroke="#cccccc" stroke-width="1.6" fill="none" stroke-linejoin="round"/><path d="M5.8 16a2.3 2.3 0 0 0 4.4 0" stroke="#cccccc" stroke-width="1.6" fill="none"/></svg>
<div id="taskbar" class="a"></div>
<svg style="left:28px;top:1016px" width="50" height="50" viewBox="28 1016 50 50">
<defs><linearGradient id="stk" x1="0" y1="0" x2="1" y2="1"><stop offset="0" stop-color="#e8470f"/><stop offset="1" stop-color="#b8240f"/></linearGradient></defs>
<path d="M33.5 1029.5c5 5 12 10 24 14" stroke="url(#stk)" stroke-width="3.2" fill="none" stroke-linecap="round"/>
<path d="M54.5 1049.2l9-5-4.5-1.8" stroke="#b02a12" stroke-width="3.2" fill="none" stroke-linecap="round" stroke-linejoin="round"/>
<rect x="32" y="1043" width="5.5" height="18" rx="1.5" fill="#e0440f"/>
<rect x="41" y="1050" width="5.5" height="11" rx="1.5" fill="#d23d12"/>
<rect x="50" y="1054.5" width="5.5" height="6.5" rx="1.5" fill="#c53413"/>
<rect x="59" y="1058" width="6" height="3" rx="1.5" fill="#b82c12"/>
<circle cx="58.5" cy="1030" r="11.5" fill="#c42b1c"/>
<text x="58.5" y="1036.5" fill="#fff" font-size="17" text-anchor="middle" font-family="Liberation Sans">3</text>
</svg>
<svg style="left:388.75px;top:1027px" width="35" height="35" viewBox="0 0 35 35">
<defs><linearGradient id="wl" x1="0" y1="0" x2="1" y2="1"><stop offset="0" stop-color="#52cdfb"/><stop offset=".5" stop-color="#1a9fe8"/><stop offset="1" stop-color="#0a6fd1"/></linearGradient></defs>
<rect x="0" y="0" width="16.8" height="16.8" rx="1.2" fill="url(#wl)"/><rect x="18.2" y="0" width="16.8" height="16.8" rx="1.2" fill="url(#wl)"/>
<rect x="0" y="18.2" width="16.8" height="16.8" rx="1.2" fill="url(#wl)"/><rect x="18.2" y="18.2" width="16.8" height="16.8" rx="1.2" fill="url(#wl)"/>
</svg>
<div class="a" style="left:445px;top:1020.4px;width:327.7px;height:46.3px;border-radius:23.2px;background:#fafafa;border:1px solid #d8d8d8;border-bottom:1.5px solid #c4c4c4"></div>
<svg style="left:462px;top:1033px" width="23" height="23" viewBox="0 0 23 23"><circle cx="9.5" cy="9.5" r="7.6" stroke="#1a1a1a" stroke-width="2.3" fill="none"/><path d="M15 15l6.3 6.3" stroke="#1a1a1a" stroke-width="2.6" stroke-linecap="round"/></svg>
<div id="t41" class="a tx" style="left:499.97px;top:1030.62px;font-size:19.50px;line-height:29.25px;color:#606060;font-weight:normal;font-family:'Liberation Sans',sans-serif;transform:scaleX(1.0256);">検索</div>
<svg style="left:700px;top:1026px" width="72" height="40" viewBox="0 0 72 40">
<defs><linearGradient id="hill" x1="0" y1="0" x2="0" y2="1"><stop offset="0" stop-color="#8a6a1c"/><stop offset=".5" stop-color="#6e8a2a"/><stop offset="1" stop-color="#7cae45"/></linearGradient></defs>
<path d="M2 37c8-6 14-14 26-18 10-4 16-6 22-6 8 0 14 4 18 8l-3 10c-4 4-10 6-18 6H4z" fill="url(#hill)"/>
<g fill="#f2b01e"><circle cx="10" cy="33" r="3"/><circle cx="17" cy="29" r="3.5"/><circle cx="25" cy="31" r="3"/><circle cx="32" cy="26" r="3.5"/><circle cx="40" cy="30" r="3"/><circle cx="47" cy="25" r="3.2"/><circle cx="55" cy="28" r="3"/><circle cx="63" cy="24" r="3"/><circle cx="36" cy="35" r="2.5"/><circle cx="51" cy="34" r="2.5"/><circle cx="20" cy="36" r="2.3"/><circle cx="62" cy="32" r="2.4"/></g>
<path d="M2 10.5c6 1 16 2.5 22 3 4-1 10-3 14-4.5l3-5-2-.5-4 4-10 1.5-10-4-2 .3 6 5-10 .2-2-2z" fill="#b9b0dc"/>
<path d="M4 13c8 .8 14 1 20 .5" stroke="#8c82b8" stroke-width="1.3" fill="none"/>
</svg>
<svg style="left:792px;top:1027px" width="37" height="35" viewBox="0 0 37 35">
<defs><linearGradient id="tvb" x1="0" y1="0" x2="1" y2="1"><stop offset="0" stop-color="#ffffff"/><stop offset="1" stop-color="#d9d9d9"/></linearGradient>
<linearGradient id="tvf" x1="0" y1="0" x2="0" y2="1"><stop offset="0" stop-color="#5a5a5a"/><stop offset="1" stop-color="#1a1a1a"/></linearGradient></defs>
<rect x="9" y="0.7" width="27" height="23" rx="2" fill="url(#tvb)" stroke="#e2e2e2" stroke-width=".6"/>
<rect x="0" y="9" width="27" height="24.6" rx="2.2" fill="url(#tvf)"/>
<rect x="9" y="9" width="18" height="15" fill="#b5b5b5" opacity=".85"/>
</svg>
<svg style="left:852px;top:1022px" width="48" height="44" viewBox="0 0 48 44">
<defs><linearGradient id="cp1" x1="0" y1="0" x2="0" y2="1"><stop offset="0" stop-color="#1cb2f5"/><stop offset=".5" stop-color="#3fa98a"/><stop offset="1" stop-color="#f5cc00"/></linearGradient>
<linearGradient id="cp2" x1="0" y1="0" x2="0" y2="1"><stop offset="0" stop-color="#a04ff0"/><stop offset=".5" stop-color="#f0528a"/><stop offset="1" stop-color="#ffa846"/></linearGradient>
<linearGradient id="cp3" x1="0" y1="0" x2="1" y2="1"><stop offset="0" stop-color="#0b2fc8"/><stop offset="1" stop-color="#1a8ae8"/></linearGradient>
<linearGradient id="cp4" x1="0" y1="0" x2="1" y2="1"><stop offset="0" stop-color="#ff7a38"/><stop offset="1" stop-color="#d8282a"/></linearGradient></defs>
<path d="M24.5 7H29c2 0 3 1.5 3.6 3.5l.9 3c.3 1 1 1.5 1.5 1.5H28c-1 0-2 .5-2.4 1.5z" fill="url(#cp3)"/>
<path d="M15 29h9.5L21 37h-4.5c-1 0-1.5-1-1.7-2.5z" fill="url(#cp4)"/>
<path d="M16 7h10c1.5 0 2 1 1.6 2.5L21 26.5c-.6 1.5-1.5 2-3 2h-8c-2 0-3-1.5-2.5-3.5l5-15C13.2 8 14.5 7 16 7z" fill="url(#cp1)"/>
<path d="M30.5 15H38c2 0 3 1.5 2.5 3.5l-5 15.5c-.7 2-2 3-4 3H23c-2 0-2.8-1.5-2.2-3.5l5.7-16c.5-1.5 2-2.5 4-2.5z" fill="url(#cp2)"/>
</svg>
<svg style="left:923.75px;top:1027.7px" width="37" height="33" viewBox="0 0 37 33">
<path d="M0 3a2.5 2.5 0 0 1 2.5-2.5h10l4 3.5H34.5A2.5 2.5 0 0 1 37 6.5v5H0z" fill="#e0a412"/>
<path d="M0 6h37v24.5a2.3 2.3 0 0 1-2.3 2.3H2.3A2.3 2.3 0 0 1 0 30.5z" fill="#ffd04a"/>
<path d="M0 6h37v3H0z" fill="#f6c23a"/>
<path d="M7.5 21.5a2.5 2.5 0 0 1 2.5-2.5h17a2.5 2.5 0 0 1 2.5 2.5v11.3h-22z" fill="#1a74d0"/>
<path d="M11.5 25h14" stroke="#0b4f9a" stroke-width="1.3"/>
</svg>
<svg style="left:990px;top:1026.7px" width="36" height="36" viewBox="0 0 36 36">
<defs><linearGradient id="ms" x1="0" y1="0" x2="0" y2="1"><stop offset="0" stop-color="#1c62b0"/><stop offset="1" stop-color="#163f80"/></linearGradient></defs>
<path d="M8.5 6V3.5a2.5 2.5 0 0 1 2.5-2.5h14a2.5 2.5 0 0 1 2.5 2.5V6" stroke="#28b8f0" stroke-width="2" fill="none"/>
<rect x="0" y="4.5" width="35.2" height="31" rx="3.5" fill="url(#ms)"/>
<rect x="10" y="12" width="7" height="7" fill="#f25022"/><rect x="18.3" y="12" width="7" height="7" fill="#7fba00"/>
<rect x="10" y="20.3" width="7" height="7" fill="#00a4ef"/><rect x="18.3" y="20.3" width="7" height="7" fill="#ffb900"/>
</svg>
<svg style="left:1056px;top:1025.6px" width="37" height="37" viewBox="0 0 37 37">
<defs><linearGradient id="ed1" x1="0" y1="0" x2="1" y2="0"><stop offset="0" stop-color="#1a86dc"/><stop offset=".35" stop-color="#0f6fc4"/><stop offset=".6" stop-color="#0d5aa6"/><stop offset="1" stop-color="#0e4f98"/></linearGradient>
<radialGradient id="ed2" cx=".7" cy=".2" r=".9"><stop offset="0" stop-color="#5ee07a"/><stop offset=".45" stop-color="#35c1f1"/><stop offset="1" stop-color="#1b9de2"/></radialGradient></defs>
<path d="M18.5 0.5C8.5 0.5.5 8.5.5 18.5c0 10 8 18 18 18 6 0 11.5-3 14.8-7.5-3 1.8-7 2.3-10.5 1.2-5-1.5-8.5-5.5-8.5-10.5 0-3.5 2.5-6 6-6 4 0 6.5 2.5 6.5 5.5 0 1.5-.5 2.5-1.5 3.3 3.5.5 10-.5 10.7-6.5C36.5 7 28 .5 18.5.5z" fill="url(#ed2)"/>
<path d="M.5 18.5c0 10 8 18 18 18 6 0 11.5-3 14.8-7.5-3 1.8-7 2.3-10.5 1.2-5-1.5-8.5-5.5-8.5-10.5 0-3.5 2.5-6 6-6-7-2-19.8 0-19.8 4.8z" fill="url(#ed1)"/>
</svg>
<div class="a" style="left:1070px;top:1068.3px;width:9px;height:4.2px;border-radius:2.1px;background:#858585"></div>
<svg style="left:1121.7px;top:1028.5px" width="37" height="31" viewBox="0 0 37 31">
<defs><linearGradient id="olb" x1="0" y1="0" x2="1" y2="1"><stop offset="0" stop-color="#1a8ee0"/><stop offset="1" stop-color="#38c8f4"/></linearGradient></defs>
<rect x="6" y="6" width="30" height="24.4" rx="3.2" fill="url(#olb)"/>
<path d="M6 12 20 1.6c.8-.6 1.6-.6 2.4 0L36 10v4H6z" fill="#22a6ea"/>
<path d="M18.4 13.6 32.6 6.7 36 9.2v1.6l-17.6 8z" fill="#1381dc"/>
<path d="M18.4 18.8 36 10.8v5.8l-17.6 7.8z" fill="#0b55b5"/>
<path d="M14 30.4 36 16.6v10.6a3.2 3.2 0 0 1-3.2 3.2z" fill="#48d5f8"/>
<rect x="0.2" y="6.5" width="18.2" height="18" rx="1.8" fill="#136fd0"/>
<ellipse cx="9.3" cy="15.5" rx="4.4" ry="4.9" stroke="#fff" stroke-width="2.3" fill="none"/>
</svg>
<svg style="left:1188px;top:1025.6px" width="36" height="36" viewBox="0 0 36 36">
<circle cx="18" cy="18" r="17.5" fill="#f8f8f8" stroke="#d6d6d6" stroke-width=".9"/>
<g stroke-linecap="round" stroke-width="4.4" fill="none">
<path d="M7 15.2h7.6M15.2 7.6v.4" stroke="#36c5f0"/><path d="M20.8 7v7.6M28.4 15.2h-.4" stroke="#2eb67d"/>
<path d="M20.8 20.8h7.6M20.8 28.4V28" stroke="#ecb22e"/><path d="M15.2 20.8v7.6M7.6 20.8H8" stroke="#e01e5a"/>
</g></svg>
<svg style="left:1258px;top:1029px" width="28" height="29" viewBox="0 0 28 29">
<path d="M1.5 4.8 21 1.6l5.6 4.4v20.2L7 28.4 1.5 22.6z" fill="#fff" stroke="#111" stroke-width="2.8" stroke-linejoin="round"/>
<path d="M1.5 4.8l5.5 4.3 19.6-3.1M7 9.1v19.3" stroke="#111" stroke-width="2.6" fill="none"/>
<text x="16.8" y="24.2" font-family="Liberation Serif" font-weight="bold" font-size="17.5" fill="#111" text-anchor="middle">N</text>
</svg>
<svg style="left:1322px;top:1028px" width="32" height="32" viewBox="0 0 32 32">
<defs><linearGradient id="bl" x1="0" y1="0" x2="0" y2="1"><stop offset="0" stop-color="#0a66ff"/><stop offset="1" stop-color="#0046c8"/></linearGradient></defs>
<circle cx="16" cy="16" r="15.6" fill="url(#bl)"/>
<circle cx="16" cy="13.5" r="6.2" fill="#fff"/><rect x="13.3" y="15" width="5.4" height="9.5" fill="#fff"/><circle cx="16" cy="13.2" r="2" fill="#0a5ae8"/>
</svg>
<div class="a" style="left:1334px;top:1067.8px;width:9px;height:5px;border-radius:2.5px;background:#858585"></div>
<div class="a" style="left:1375.3px;top:1014.8px;width:57.4px;height:58.6px;border-radius:6.5px;background:#f7f7f7;border:1px solid #e2e2e2;border-bottom:1.5px solid #d4d4d4"></div>
<svg style="left:1386px;top:1025.6px" width="36" height="36" viewBox="0 0 100 100"><path fill="#0a6db3" d="M96.46 10.8 75.86.88C73.47-.27 70.62.21 68.75 2.08L1.3 63.58c-1.82 1.65-1.81 4.51 0 6.16l5.51 5.01c1.49 1.35 3.72 1.45 5.32.24L93.36 13.37c2.73-2.07 6.64-.12 6.64 3.3v-.24c0-2.4-1.38-4.59-3.54-5.63z"/><path fill="#0a87d2" d="M96.46 89.2 75.86 99.12c-2.39 1.15-5.24.67-7.11-1.2L1.3 36.42c-1.82-1.65-1.81-4.51 0-6.16l5.51-5.01c1.49-1.35 3.72-1.45 5.32-.24l81.23 61.62c2.73 2.07 6.64.12 6.64-3.3v.24c0 2.4-1.38 4.59-3.54 5.63z"/><path fill="#21a1f1" d="M75.86 99.13c-2.39 1.15-5.24.66-7.11-1.21 2.31 2.31 6.25.67 6.25-2.59V4.67c0-3.26-3.94-4.9-6.25-2.59 1.87-1.87 4.72-2.36 7.11-1.21l20.6 9.91c2.16 1.04 3.54 3.23 3.54 5.63v67.18c0 2.4-1.38 4.59-3.54 5.63z"/></svg>
<div class="a" style="left:1392px;top:1067.8px;width:24px;height:5px;border-radius:2.5px;background:#0067c0"></div>
<svg style="left:1539px;top:1038.5px" width="17" height="10" viewBox="0 0 17 10"><path d="M1 9 8.5 1.5 16 9" stroke="#1a1a1a" stroke-width="1.6" fill="none"/></svg>
<svg style="left:1583px;top:1035.5px" width="25" height="17" viewBox="0 0 25 17">
<path d="M5.5 16.3h15a3.8 3.8 0 0 0 .6-7.5A6.8 6.8 0 0 0 8.3 6 5 5 0 0 0 5.5 16.3z" fill="#9a9a9a" stroke="#1a1a1a" stroke-width="1.4"/>
<path d="M5.5 16.3h15a3.8 3.8 0 0 0 .6-7.5c-3-.3-6 1.5-8.5 4.5z" fill="#c8c8c8"/>
<path d="M5.5 16.3h15a3.8 3.8 0 0 0 .6-7.5A6.8 6.8 0 0 0 8.3 6 5 5 0 0 0 5.5 16.3z" fill="none" stroke="#1a1a1a" stroke-width="1.4"/>
</svg>
<svg style="left:1634px;top:1032.5px" width="19" height="24" viewBox="0 0 19 24"><path d="M1 23.5 9.5 1 18 23.5M4.6 15.5h9.8" stroke="#1a1a1a" stroke-width="1.5" fill="none"/></svg>
<svg style="left:1678.75px;top:1035px" width="25" height="17" viewBox="0 0 25 17">
<path d="M1.2 6.3a16 16 0 0 1 22.6 0M4.7 9.7a11 11 0 0 1 15.6 0M8.2 13a6 6 0 0 1 8.6 0" stroke="#1a1a1a" stroke-width="1.7" fill="none" stroke-linecap="round"/><circle cx="12.5" cy="15.3" r="1.7" fill="#1a1a1a"/></svg>
<svg style="left:1714.8px;top:1035.4px" width="25" height="18" viewBox="0 0 25 18">
<path d="M1 6h4l6-5v16l-6-5H1z" stroke="#1a1a1a" stroke-width="1.5" fill="none" stroke-linejoin="round"/>
<path d="M14.5 5.5a4.5 4.5 0 0 1 0 7M17.5 3a8 8 0 0 1 0 12" stroke="#1a1a1a" stroke-width="1.5" fill="none" stroke-linecap="round"/>
<path d="M20.5 1a11 11 0 0 1 0 16" stroke="#b0b0b0" stroke-width="1.5" fill="none" stroke-linecap="round"/></svg>
<svg style="left:1750.8px;top:1032.5px" width="25" height="20" viewBox="0 0 25 20">
<rect x="1.5" y="5" width="19" height="13.5" rx="2.5" stroke="#1a1a1a" stroke-width="1.6" fill="none"/>
<path d="M3.5 16.5h10l3-9.5h-10z" fill="#1a1a1a"/><rect x="21" y="9" width="3" height="5.5" rx="1" fill="#1a1a1a"/>
<path d="M7.5 0 3.5 7h3l-1 5 5-7.5H7.5z" fill="#1a1a1a" stroke="#eeeeee" stroke-width="1"/></svg>
<div id="t42" class="a tx" style="left:1858.25px;top:1017.91px;font-size:18.50px;line-height:27.75px;color:#1a1a1a;font-weight:normal;font-family:'Liberation Sans',sans-serif;transform:scaleX(0.9309);">9:05</div>
<div id="t43" class="a tx" style="left:1799.99px;top:1041.91px;font-size:18.50px;line-height:27.75px;color:#1a1a1a;font-weight:normal;font-family:'Liberation Sans',sans-serif;transform:scaleX(0.9940);">2025/02/25</div>
</body></html>
